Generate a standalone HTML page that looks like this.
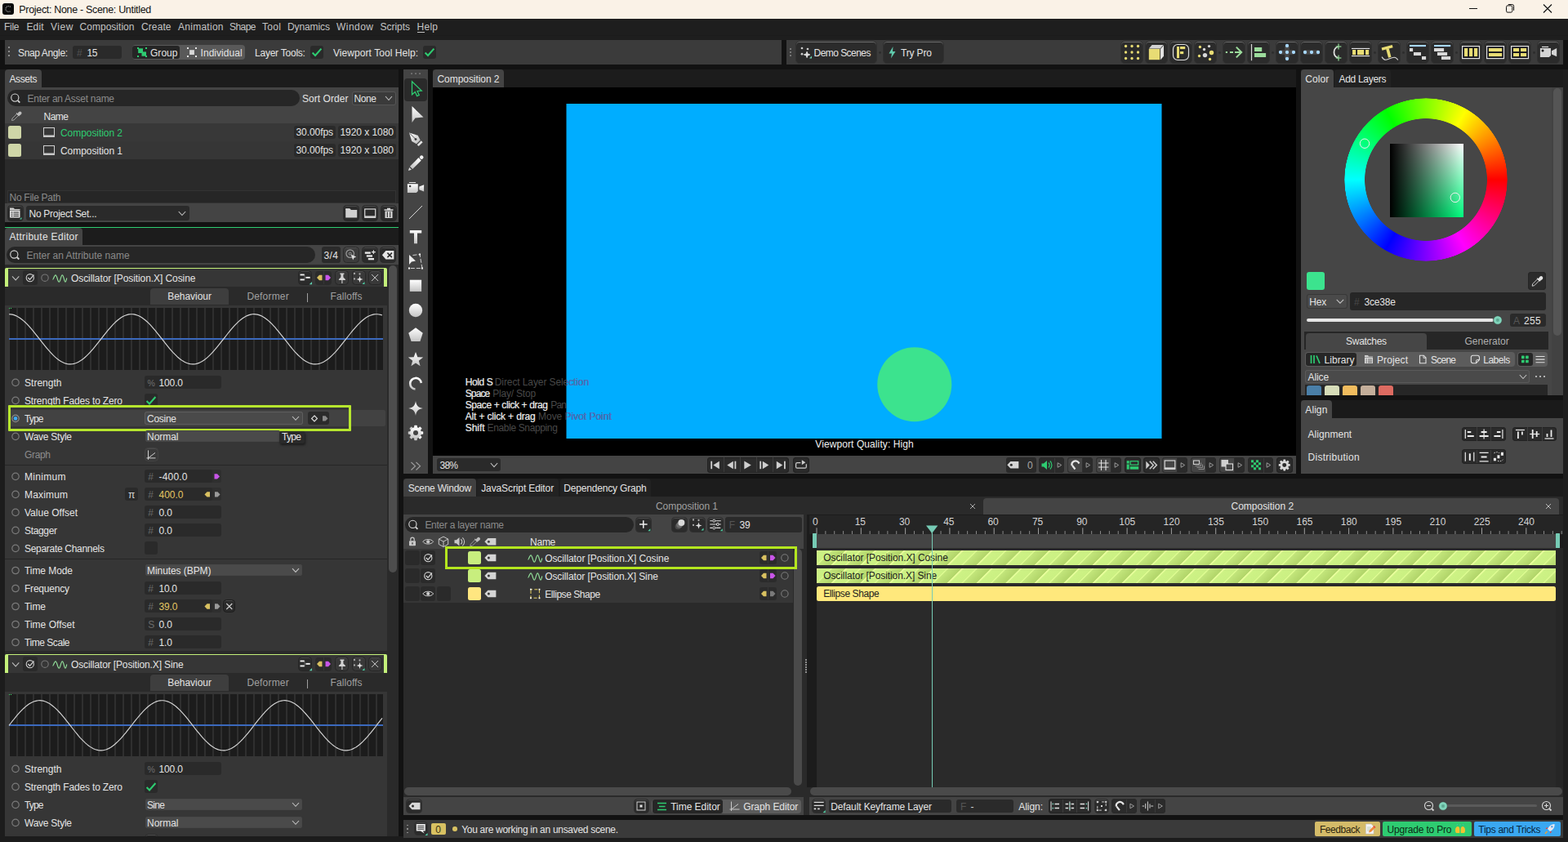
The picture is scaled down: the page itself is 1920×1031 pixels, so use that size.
<!DOCTYPE html>
<html lang="en"><head><meta charset="utf-8"><title>Project: None - Scene: Untitled</title>
<style>
html,body{margin:0;padding:0;width:1920px;height:1031px;overflow:hidden;background:#1c1c1c;}
body{position:relative;font-family:"Liberation Sans",sans-serif;font-size:12px;color:#e4e4e4;}
div,span,svg{position:absolute;box-sizing:border-box;}
span{white-space:pre;}
svg{overflow:visible;}
</style></head><body>
<div style="left:0px;top:0px;width:1920px;height:23px;background:#faf2e7;"></div>
<svg style="left:3px;top:4px;" width="14" height="14" viewBox="0 0 14 14"><rect x="0" y="0" width="14" height="14" rx="3" fill="#0a0a0a"/><path d="M9.8 4.6A3.4 3.4 0 1 0 9.8 9.4" fill="none" stroke="#8a8a8a" stroke-width="1.3" stroke-dasharray="1.2 0.8"/></svg>
<span style="left:23.3px;top:5px;line-height:14px;letter-spacing:-0.32px;font-size:12.5px;color:#101010;">Project: None - Scene: Untitled</span>
<svg style="left:1799px;top:5px;" width="10" height="11" viewBox="0 0 10 11"><path d="M0 5.5H10" stroke="#111" stroke-width="1"/></svg>
<svg style="left:1844px;top:5px;" width="10" height="11" viewBox="0 0 10 11"><rect x="0.5" y="1.9" width="7.3" height="8.2" rx="1.6" fill="none" stroke="#111" stroke-width="1"/><path d="M2.8 0.5H7.6A2 2 0 0 1 9.6 2.5V7.8" fill="none" stroke="#111" stroke-width="1"/></svg>
<svg style="left:1890px;top:5px;" width="10" height="11" viewBox="0 0 10 11"><path d="M0 .5L10 10.5M10 .5L0 10.5" stroke="#111" stroke-width="1.1"/></svg>
<div style="left:0px;top:23px;width:1920px;height:20px;background:#1e1e1e;"></div>
<div style="left:0px;top:43px;width:1920px;height:6px;background:#1e1e1e;"></div>
<div style="left:0px;top:43px;width:1920px;height:1px;background:#1b1b1b;"></div>
<div style="left:0px;top:49px;width:1920px;height:36px;background:#121212;"></div>
<span style="left:5px;top:26px;line-height:14px;letter-spacing:-0.28px;color:#c4c4c4;">File</span>
<span style="left:32.5px;top:26px;line-height:14px;letter-spacing:0.11px;color:#c4c4c4;">Edit</span>
<span style="left:62px;top:26px;line-height:14px;letter-spacing:0.57px;color:#c4c4c4;">View</span>
<span style="left:97.5px;top:26px;line-height:14px;letter-spacing:0.03px;color:#c4c4c4;">Composition</span>
<span style="left:173px;top:26px;line-height:14px;letter-spacing:0.1px;color:#c4c4c4;">Create</span>
<span style="left:218px;top:26px;line-height:14px;letter-spacing:0.27px;color:#c4c4c4;">Animation</span>
<span style="left:281px;top:26px;line-height:14px;letter-spacing:-0.55px;color:#c4c4c4;">Shape</span>
<span style="left:321px;top:26px;line-height:14px;letter-spacing:0.33px;color:#c4c4c4;">Tool</span>
<span style="left:352px;top:26px;line-height:14px;letter-spacing:-0.1px;color:#c4c4c4;">Dynamics</span>
<span style="left:412px;top:26px;line-height:14px;letter-spacing:0.46px;color:#c4c4c4;">Window</span>
<span style="left:465.5px;top:26px;line-height:14px;letter-spacing:-0.03px;color:#c4c4c4;">Scripts</span>
<span style="left:510.5px;top:26px;line-height:14px;letter-spacing:0.27px;color:#c4c4c4;">Help</span>
<div style="left:511px;top:39px;width:9px;height:1px;background:#c4c4c4;"></div>
<div style="left:6px;top:49px;width:951px;height:30px;background:#3b3b3b;"></div>
<div style="left:10px;top:57px;width:2px;height:2px;background:#8c8c8c;"></div>
<div style="left:10px;top:62px;width:2px;height:2px;background:#8c8c8c;"></div>
<div style="left:10px;top:67px;width:2px;height:2px;background:#8c8c8c;"></div>
<span style="left:22px;top:58px;line-height:14px;letter-spacing:-0.37px;">Snap Angle:</span>
<div style="left:89px;top:56px;width:60px;height:16px;background:#2a2a2a;border-radius:3px;"></div>
<span style="left:94px;top:58px;line-height:14px;color:#555;">#</span>
<span style="left:106.5px;top:58px;line-height:14px;letter-spacing:-0.35px;">15</span>
<div style="left:161.5px;top:55.3px;width:138.5px;height:17.5px;background:#595959;border-radius:4px;"></div>
<div style="left:162.3px;top:56.2px;width:57.5px;height:15.6px;background:#252525;border-radius:3px;"></div>
<svg style="left:168px;top:58px;" width="12" height="12" viewBox="0 0 12 12"><rect x="1.2" y="1.3" width="5.8" height="5.7" fill="#2ecc71"/><rect x="5.5" y="5.4" width="5.5" height="5.3" fill="#2ecc71"/><rect x="0" y="0" width="2" height="2" fill="#2ecc71"/><rect x="10" y="0" width="2" height="2" fill="#2ecc71"/><rect x="0" y="10" width="2" height="2" fill="#2ecc71"/><rect x="10" y="10" width="2" height="2" fill="#2ecc71"/></svg>
<span style="left:184px;top:58px;line-height:14px;letter-spacing:0.04px;">Group</span>
<svg style="left:229px;top:58px;" width="12" height="12" viewBox="0 0 12 12"><rect x="3.1" y="3.2" width="5.8" height="5.8" fill="#d8d8d8"/><rect x="0" y="0" width="2" height="2" fill="#e4e4e4"/><rect x="10" y="0" width="2" height="2" fill="#e4e4e4"/><rect x="0" y="10" width="2" height="2" fill="#e4e4e4"/><rect x="10" y="10" width="2" height="2" fill="#e4e4e4"/></svg>
<span style="left:245.6px;top:58px;line-height:14px;letter-spacing:0.03px;">Individual</span>
<span style="left:312px;top:58px;line-height:14px;letter-spacing:-0.23px;">Layer Tools:</span>
<div style="left:380px;top:56px;width:16px;height:16px;background:#2a2a2a;border-radius:3px;"></div>
<svg style="left:380px;top:56px;" width="16" height="16" viewBox="0 0 16 16"><path d="M2.6 8.6L6 12L13.4 3.6" fill="none" stroke="#2ecc71" stroke-width="2.1"/></svg>
<span style="left:408px;top:58px;line-height:14px;letter-spacing:0.06px;">Viewport Tool Help:</span>
<div style="left:518px;top:56px;width:16px;height:16px;background:#2a2a2a;border-radius:3px;"></div>
<svg style="left:518px;top:56px;" width="16" height="16" viewBox="0 0 16 16"><path d="M2.6 8.6L6 12L13.4 3.6" fill="none" stroke="#2ecc71" stroke-width="2.1"/></svg>
<div style="left:963px;top:49px;width:951px;height:30px;background:#3b3b3b;"></div>
<div style="left:967px;top:59px;width:2px;height:2px;background:#777;"></div>
<div style="left:967px;top:63px;width:2px;height:2px;background:#777;"></div>
<div style="left:967px;top:67px;width:2px;height:2px;background:#777;"></div>
<div style="left:974px;top:50px;width:100px;height:28px;background:#2b2b2b;border-radius:5px;border:1px solid #313131;box-shadow:inset 0 1px 0 #6a6a6a;"></div>
<span style="left:996.5px;top:58px;line-height:14px;letter-spacing:-0.54px;">Demo Scenes</span>
<svg style="left:980px;top:57px;" width="16" height="16" viewBox="0 0 16 16"><g fill="#cdcdcd"><circle cx="2" cy="2" r="1.35"/><circle cx="9" cy="3" r="1.35"/><circle cx="2" cy="9.2" r="1.35"/><path d="M8.1 6.2L9 8.9L11.8 9.9L9 10.9L8.1 13.6L7.2 10.9L4.4 9.9L7.2 8.9Z" stroke="#e4e4e4" stroke-width="0.9" fill="#e4e4e4"/></g><path d="M14 11.5V14.5H11Z" fill="#6fd4b4"/></svg>
<svg style="left:1075px;top:62px;" width="5" height="5" viewBox="0 0 5 5"><g transform="translate(0.6,0.4)"><circle cx="2" cy="2" r="1.4" fill="#2c2c2c"/></g></svg>
<div style="left:1081px;top:50px;width:75px;height:28px;background:#2b2b2b;border-radius:5px;border:1px solid #313131;box-shadow:inset 0 1px 0 #6a6a6a;"></div>
<svg style="left:1088px;top:57px;" width="9" height="15" viewBox="0 0 9 15"><path d="M5.5 0L0.5 8.5H4L3 14.5L8.5 6H5Z" fill="#5fc9ab"/></svg>
<span style="left:1103px;top:58px;line-height:14px;letter-spacing:-0.15px;">Try Pro</span>
<svg style="left:1491px;top:62px;" width="5" height="5" viewBox="0 0 5 5"><g transform="translate(0.5,0.4)"><circle cx="2" cy="2" r="1.4" fill="#2c2c2c"/></g></svg>
<svg style="left:1556px;top:62px;" width="5" height="5" viewBox="0 0 5 5"><g transform="translate(0.5,0.4)"><circle cx="2" cy="2" r="1.4" fill="#2c2c2c"/></g></svg>
<svg style="left:1681px;top:62px;" width="5" height="5" viewBox="0 0 5 5"><g transform="translate(0.5,0.4)"><circle cx="2" cy="2" r="1.4" fill="#2c2c2c"/></g></svg>
<svg style="left:1716px;top:62px;" width="5" height="5" viewBox="0 0 5 5"><g transform="translate(0.5,0.4)"><circle cx="2" cy="2" r="1.4" fill="#2c2c2c"/></g></svg>
<svg style="left:1781px;top:62px;" width="5" height="5" viewBox="0 0 5 5"><g transform="translate(0.5,0.4)"><circle cx="2" cy="2" r="1.4" fill="#2c2c2c"/></g></svg>
<svg style="left:1876px;top:62px;" width="5" height="5" viewBox="0 0 5 5"><g transform="translate(0.5,0.4)"><circle cx="2" cy="2" r="1.4" fill="#2c2c2c"/></g></svg>
<div style="left:1372px;top:50px;width:28px;height:28px;background:#2b2b2b;border-radius:5px;border:1px solid #313131;box-shadow:inset 0 1px 0 #6a6a6a;"></div>
<svg style="left:1372px;top:50px;" width="28" height="28" viewBox="0 0 28 28"><circle cx="6.5" cy="6.5" r="1.65" fill="#e8dc74"/><circle cx="6.5" cy="14.0" r="1.65" fill="#e8dc74"/><circle cx="6.5" cy="21.5" r="1.65" fill="#e8dc74"/><circle cx="14.0" cy="6.5" r="1.65" fill="#e8dc74"/><circle cx="14.0" cy="14.0" r="1.65" fill="#e8dc74"/><circle cx="14.0" cy="21.5" r="1.65" fill="#e8dc74"/><circle cx="21.5" cy="6.5" r="1.65" fill="#e8dc74"/><circle cx="21.5" cy="14.0" r="1.65" fill="#e8dc74"/><circle cx="21.5" cy="21.5" r="1.65" fill="#e8dc74"/></svg>
<div style="left:1402px;top:50px;width:28px;height:28px;background:#2b2b2b;border-radius:5px;border:1px solid #313131;box-shadow:inset 0 1px 0 #6a6a6a;"></div>
<svg style="left:1402px;top:50px;" width="28" height="28" viewBox="0 0 28 28"><path d="M4.8 9.4L8.6 5H22.6L18.6 9.4Z" fill="#d2d2d2"/><path d="M19 10L23 5.6V18.8L19 23.2Z" fill="#e2e2e2"/><rect x="4.8" y="9.9" width="13.4" height="13.3" fill="#e8dc74"/></svg>
<div style="left:1432px;top:50px;width:28px;height:28px;background:#2b2b2b;border-radius:5px;border:1px solid #313131;box-shadow:inset 0 1px 0 #6a6a6a;"></div>
<svg style="left:1432px;top:50px;" width="28" height="28" viewBox="0 0 28 28"><rect x="4.5" y="4.5" width="19" height="19" rx="5.5" fill="none" stroke="#dcdcdc" stroke-width="1.2"/><rect x="9" y="7" width="3" height="14.2" fill="#e8dc74"/><rect x="13" y="7" width="6.2" height="3.1" fill="#e8dc74"/><rect x="13" y="13" width="4.2" height="3.1" fill="#e8dc74"/></svg>
<div style="left:1462px;top:50px;width:28px;height:28px;background:#2b2b2b;border-radius:5px;border:1px solid #313131;box-shadow:inset 0 1px 0 #6a6a6a;"></div>
<svg style="left:1462px;top:50px;" width="28" height="28" viewBox="0 0 28 28"><circle cx="7.4" cy="7.5" r="1.65" fill="#e8dc74"/><circle cx="18.5" cy="6.6" r="1.65" fill="#d8d8d8"/><circle cx="12.5" cy="10.5" r="1.65" fill="#d8d8d8"/><circle cx="21.5" cy="14.5" r="2.7" fill="#e8dc74"/><circle cx="13.5" cy="17.6" r="2.7" fill="#d8d8d8"/><circle cx="6.5" cy="18.5" r="1.65" fill="#e8dc74"/><circle cx="19.5" cy="22.5" r="1.65" fill="#e8dc74"/></svg>
<div style="left:1497px;top:50px;width:28px;height:28px;background:#2b2b2b;border-radius:5px;border:1px solid #313131;box-shadow:inset 0 1px 0 #6a6a6a;"></div>
<svg style="left:1497px;top:50px;" width="28" height="28" viewBox="0 0 28 28"><rect x="3.8" y="13" width="2.2" height="2" fill="#9cdc9c"/><rect x="9" y="13" width="4" height="2" fill="#9cdc9c"/><rect x="15" y="13" width="8" height="2" fill="#9cdc9c"/><path d="M16.8 7.6L23.2 14L16.8 20.4" fill="none" stroke="#9cdc9c" stroke-width="2"/></svg>
<div style="left:1527px;top:50px;width:28px;height:28px;background:#2b2b2b;border-radius:5px;border:1px solid #313131;box-shadow:inset 0 1px 0 #6a6a6a;"></div>
<svg style="left:1527px;top:50px;" width="28" height="28" viewBox="0 0 28 28"><rect x="4.9" y="4" width="1.2" height="20.2" fill="#d8d8d8"/><rect x="9" y="8" width="9.2" height="5" fill="#9cdc9c"/><rect x="9" y="15" width="14.1" height="5" fill="#9cdc9c"/></svg>
<div style="left:1562px;top:50px;width:28px;height:28px;background:#2b2b2b;border-radius:5px;border:1px solid #313131;box-shadow:inset 0 1px 0 #6a6a6a;"></div>
<svg style="left:1562px;top:50px;" width="28" height="28" viewBox="0 0 28 28"><rect x="5" y="11.2" width="18" height="5.6" rx="2.8" fill="#484848"/><rect x="11.2" y="5" width="5.6" height="18" rx="2.8" fill="#484848"/><circle cx="14" cy="6" r="2.15" fill="#a8d8ff"/><circle cx="6" cy="14" r="2.15" fill="#a8d8ff"/><circle cx="14" cy="14" r="2.15" fill="#a8d8ff"/><circle cx="22" cy="14" r="2.15" fill="#a8d8ff"/><circle cx="14" cy="22" r="2.15" fill="#a8d8ff"/></svg>
<div style="left:1592px;top:50px;width:28px;height:28px;background:#2b2b2b;border-radius:5px;border:1px solid #313131;box-shadow:inset 0 1px 0 #6a6a6a;"></div>
<svg style="left:1592px;top:50px;" width="28" height="28" viewBox="0 0 28 28"><rect x="4" y="11.2" width="20" height="5.6" rx="2.8" fill="#484848"/><circle cx="6" cy="14" r="2.15" fill="#a8d8ff"/><circle cx="14" cy="14" r="2.15" fill="#a8d8ff"/><circle cx="22" cy="14" r="2.15" fill="#a8d8ff"/></svg>
<div style="left:1622px;top:50px;width:28px;height:28px;background:#2b2b2b;border-radius:5px;border:1px solid #313131;box-shadow:inset 0 1px 0 #6a6a6a;"></div>
<svg style="left:1622px;top:50px;" width="28" height="28" viewBox="0 0 28 28"><path d="M17 7A7.2 7.2 0 0 0 17 21" fill="none" stroke="#e2e2e2" stroke-width="1.7"/><path d="M17 3.5V10.5M13.8 7H20.4M17 17.5V24.5M13.8 21H20.4" stroke="#8fd494" stroke-width="1.5" opacity="0.85"/></svg>
<div style="left:1652px;top:50px;width:28px;height:28px;background:#2b2b2b;border-radius:5px;border:1px solid #313131;box-shadow:inset 0 1px 0 #6a6a6a;"></div>
<svg style="left:1652px;top:50px;" width="28" height="28" viewBox="0 0 28 28"><rect x="3" y="8.9" width="22.2" height="1.2" fill="#e8e8e8"/><rect x="3" y="17.9" width="22.2" height="1.2" fill="#e8e8e8"/><rect x="3.5" y="10.3" width="21.2" height="7.4" fill="#15151c"/><rect x="4" y="11" width="4.2" height="6.2" fill="#e8dc74"/><rect x="10" y="11" width="8.2" height="6.2" fill="#e8dc74"/><rect x="20" y="11" width="4.2" height="6.2" fill="#e8dc74"/></svg>
<div style="left:1687px;top:50px;width:28px;height:28px;background:#2b2b2b;border-radius:5px;border:1px solid #313131;box-shadow:inset 0 1px 0 #6a6a6a;"></div>
<svg style="left:1687px;top:50px;" width="28" height="28" viewBox="0 0 28 28"><g transform="translate(11.6,8.3) rotate(-15)"><rect x="-6.8" y="-1.7" width="13.6" height="3.4" fill="#e8dc74"/><rect x="-1.8" y="1.5" width="3.6" height="10.8" fill="#e8dc74"/></g><path d="M5 19.6C6.5 22 8 23.5 10 23.3C13.5 23 16 20.5 20 20.2C22.5 20 23.8 21.8 24.8 23.6" fill="none" stroke="#d4d4d4" stroke-width="1.1"/></svg>
<div style="left:1722px;top:50px;width:28px;height:28px;background:#2b2b2b;border-radius:5px;border:1px solid #313131;box-shadow:inset 0 1px 0 #6a6a6a;"></div>
<svg style="left:1722px;top:50px;" width="28" height="28" viewBox="0 0 28 28"><rect x="4" y="5" width="20" height="2.1" fill="#a8d8ff"/><rect x="4" y="9" width="4.1" height="4" fill="#d8d8d8"/><rect x="9" y="14" width="9" height="4" fill="#d8d8d8"/><rect x="19" y="19" width="5.1" height="4" fill="#d8d8d8"/></svg>
<div style="left:1752px;top:50px;width:28px;height:28px;background:#2b2b2b;border-radius:5px;border:1px solid #313131;box-shadow:inset 0 1px 0 #6a6a6a;"></div>
<svg style="left:1752px;top:50px;" width="28" height="28" viewBox="0 0 28 28"><rect x="4" y="5" width="20.2" height="2.1" fill="#a8d8ff"/><rect x="4" y="9" width="12.1" height="4" fill="#d8d8d8"/><rect x="8" y="14" width="12.1" height="4" fill="#d8d8d8"/><rect x="13" y="19" width="11.1" height="4" fill="#d8d8d8"/></svg>
<div style="left:1787px;top:50px;width:28px;height:28px;background:#2b2b2b;border-radius:5px;border:1px solid #313131;box-shadow:inset 0 1px 0 #6a6a6a;"></div>
<svg style="left:1787px;top:50px;" width="28" height="28" viewBox="0 0 28 28"><rect x="3.6" y="6.6" width="20.9" height="15" fill="#15151c" stroke="#e2e2e2" stroke-width="1.2"/><rect x="6" y="9" width="4.2" height="10.1" fill="#e8dc74"/><rect x="12" y="9" width="4.2" height="10.1" fill="#e8dc74"/><rect x="18" y="9" width="4.2" height="10.1" fill="#e8dc74"/></svg>
<div style="left:1817px;top:50px;width:28px;height:28px;background:#2b2b2b;border-radius:5px;border:1px solid #313131;box-shadow:inset 0 1px 0 #6a6a6a;"></div>
<svg style="left:1817px;top:50px;" width="28" height="28" viewBox="0 0 28 28"><rect x="3.6" y="6.6" width="20.9" height="15" fill="#15151c" stroke="#e2e2e2" stroke-width="1.2"/><rect x="6" y="9" width="16.2" height="4.1" fill="#e8dc74"/><rect x="6" y="15" width="16.2" height="4.1" fill="#e8dc74"/></svg>
<div style="left:1847px;top:50px;width:28px;height:28px;background:#2b2b2b;border-radius:5px;border:1px solid #313131;box-shadow:inset 0 1px 0 #6a6a6a;"></div>
<svg style="left:1847px;top:50px;" width="28" height="28" viewBox="0 0 28 28"><rect x="3.6" y="6.6" width="20.9" height="15" fill="#15151c" stroke="#e2e2e2" stroke-width="1.2"/><rect x="6" y="9" width="7.1" height="4.1" fill="#e8dc74"/><rect x="6" y="15" width="7.1" height="4.1" fill="#e8dc74"/><rect x="15" y="9" width="7.1" height="4.1" fill="#e8dc74"/><rect x="15" y="15" width="7.1" height="4.1" fill="#e8dc74"/></svg>
<div style="left:1882px;top:50px;width:28px;height:28px;background:#2b2b2b;border-radius:5px;border:1px solid #313131;box-shadow:inset 0 1px 0 #6a6a6a;"></div>
<svg style="left:1882px;top:50px;" width="28" height="28" viewBox="0 0 28 28"><rect x="6" y="6.9" width="8.1" height="1.1" fill="#e8e8e8"/><path d="M3.9 8.9H17V18L14.8 20.1H3.9Z" fill="#d4d4d4"/><path d="M18 12.3L24.2 8.9V19.3L18 16.5Z" fill="#d4d4d4"/><circle cx="7" cy="12" r="1.5" fill="#1c1c1c"/></svg>
<div style="left:6px;top:85px;width:482px;height:22px;background:#1c1c1c;"></div>
<div style="left:6px;top:85px;width:45px;height:22px;background:#444;border-radius:4px 4px 0 0;"></div>
<span style="left:11.5px;top:90px;line-height:14px;letter-spacing:-0.4px;">Assets</span>
<div style="left:6px;top:107px;width:482px;height:44px;background:#444;"></div>
<div style="left:9px;top:110px;width:357.5px;height:20px;background:#262626;border-radius:10px;"></div>
<svg style="left:12px;top:113px;" width="15" height="15" viewBox="0 0 15 15"><g transform="translate(0.3,0.6)"><circle cx="6" cy="6" r="4.6" fill="none" stroke="#d8d8d8" stroke-width="1.1"/><path d="M9.5 9.5L12 12" stroke="#d8d8d8" stroke-width="1.8"/></g></svg>
<span style="left:33.5px;top:114px;line-height:14px;letter-spacing:-0.27px;color:#8a8a8a;">Enter an Asset name</span>
<span style="left:370px;top:114px;line-height:14px;letter-spacing:0.05px;">Sort Order</span>
<div style="left:430.5px;top:111.5px;width:54px;height:17px;background:#3a3a3a;border-radius:3px;box-shadow:inset 0 0 0 1px #555;"></div>
<span style="left:433.5px;top:114px;line-height:14px;letter-spacing:-0.4px;">None</span>
<svg style="left:472px;top:118px;" width="8" height="5" viewBox="0 0 8 5"><path d="M0 0L4.0 4.5L8 0" fill="none" stroke="#c4c4c4" stroke-width="1.05"/></svg>
<svg style="left:13px;top:135px;" width="14" height="14" viewBox="0 0 14 14"><path d="M1.5 12.5L2 10L7.5 4.5L9.5 6.5L4 12Z" fill="none" stroke="#9a9a9a" stroke-width="1"/><path d="M7 3.5L10.5 7M8.5 5L10.5 2.5A1.4 1.4 0 0 1 12.5 4.5L10 6.5" fill="#bdbdbd" stroke="#bdbdbd" stroke-width="1.2"/></svg>
<span style="left:53.5px;top:135.5px;line-height:14px;letter-spacing:-0.5px;">Name</span>
<div style="left:6px;top:151px;width:482px;height:22px;background:#383838;"></div>
<div style="left:6px;top:173px;width:482px;height:22px;background:#363636;"></div>
<div style="left:6px;top:195px;width:482px;height:37px;background:#2a2a2a;"></div>
<div style="left:10px;top:154px;width:16px;height:16px;background:#cfd6a8;border-radius:2.5px;"></div>
<svg style="left:53px;top:156px;" width="14" height="12" viewBox="0 0 14 12"><rect x="0.5" y="0.5" width="13" height="9.5" fill="none" stroke="#d0d0d0" stroke-width="1"/><rect x="0" y="10" width="14" height="2" fill="#c8c8c8"/></svg>
<span style="left:74px;top:156px;line-height:14px;letter-spacing:-0.06px;color:#2ecc71;">Composition 2</span>
<div style="left:360px;top:154px;width:51px;height:16px;background:#2a2a2a;border-radius:3px;"></div>
<span style="left:362.5px;top:155px;line-height:14px;letter-spacing:-0.08px;">30.00fps</span>
<div style="left:414px;top:154px;width:71px;height:16px;background:#2a2a2a;border-radius:3px;"></div>
<span style="left:416.5px;top:155px;line-height:14px;letter-spacing:-0.06px;">1920 x 1080</span>
<div style="left:10px;top:176px;width:16px;height:16px;background:#cfd6a8;border-radius:2.5px;"></div>
<svg style="left:53px;top:178px;" width="14" height="12" viewBox="0 0 14 12"><rect x="0.5" y="0.5" width="13" height="9.5" fill="none" stroke="#d0d0d0" stroke-width="1"/><rect x="0" y="10" width="14" height="2" fill="#c8c8c8"/></svg>
<span style="left:74px;top:178px;line-height:14px;letter-spacing:-0.06px;">Composition 1</span>
<div style="left:360px;top:176px;width:51px;height:16px;background:#2a2a2a;border-radius:3px;"></div>
<span style="left:362.5px;top:177px;line-height:14px;letter-spacing:-0.08px;">30.00fps</span>
<div style="left:414px;top:176px;width:71px;height:16px;background:#2a2a2a;border-radius:3px;"></div>
<span style="left:416.5px;top:177px;line-height:14px;letter-spacing:-0.06px;">1920 x 1080</span>
<div style="left:6px;top:232px;width:482px;height:17px;background:#2a2a2a;"></div>
<div style="left:9px;top:233px;width:476px;height:16px;background:#262626;box-shadow:inset 0 0 0 1px #333;"></div>
<span style="left:11.5px;top:235px;line-height:14px;letter-spacing:-0.28px;color:#8a8a8a;">No File Path</span>
<div style="left:6px;top:249px;width:482px;height:23px;background:#444;"></div>
<div style="left:9px;top:251px;width:20px;height:20px;background:#2b2b2b;border-radius:4.5px;border:1px solid #2a2a2a;box-shadow:inset 0 1px 0 #4a4a4a;"></div>
<svg style="left:11px;top:253px;" width="16" height="16" viewBox="0 0 16 16"><g transform="translate(0.5,0.5)"><path d="M0.5 1H5L6.5 2.5H13V3.5H0.5Z" fill="#d0d0d0"/><rect x="0.5" y="4" width="12.5" height="9" fill="#e2e2e2"/><path d="M2 6.5H4M5 6.5H11.5M2 8.7H4M5 8.7H11.5M2 11H4M5 11H11.5" stroke="#2b2b2b" stroke-width="1.1"/><path d="M15 12.5V15H12.5Z" fill="#4fd1a5"/></g></svg>
<div style="left:32px;top:252px;width:200px;height:18px;background:#2a2a2a;border-radius:3px;"></div>
<span style="left:35.5px;top:255.3px;line-height:14px;letter-spacing:-0.27px;">No Project Set...</span>
<svg style="left:218px;top:259px;" width="10" height="5" viewBox="0 0 10 5"><g transform="translate(0.7,0)"><path d="M0 0L4.25 4.6L8.5 0" fill="none" stroke="#c4c4c4" stroke-width="1.05"/></g></svg>
<div style="left:420px;top:251px;width:20px;height:20px;background:#2b2b2b;border-radius:4.5px;border:1px solid #2a2a2a;box-shadow:inset 0 1px 0 #4a4a4a;"></div>
<div style="left:443px;top:251px;width:20px;height:20px;background:#2b2b2b;border-radius:4.5px;border:1px solid #2a2a2a;box-shadow:inset 0 1px 0 #4a4a4a;"></div>
<div style="left:466px;top:251px;width:20px;height:20px;background:#2b2b2b;border-radius:4.5px;border:1px solid #2a2a2a;box-shadow:inset 0 1px 0 #4a4a4a;"></div>
<svg style="left:420px;top:251px;" width="21" height="20" viewBox="0 0 21 20"><g transform="translate(0.2,0)"><path d="M3 4.5H8L9.5 6H17V15.5H3Z" fill="#cfcfcf"/><path d="M3 4.5H8L9.5 6H3Z" fill="#dedede"/></g></svg>
<svg style="left:443px;top:251px;" width="21" height="20" viewBox="0 0 21 20"><g transform="translate(0.2,0)"><rect x="3.5" y="5" width="13" height="9" fill="none" stroke="#d8d8d8" stroke-width="1.2"/><rect x="3" y="14" width="14" height="2" fill="#cfcfcf"/></g></svg>
<svg style="left:466px;top:251px;" width="20" height="20" viewBox="0 0 20 20"><path d="M4.5 6H15.5M8 4.5H12" stroke="#d8d8d8" stroke-width="1.4"/><path d="M5.5 7.5H14.5V16H5.5Z" fill="#d8d8d8"/><path d="M8.3 8.5V15M11.7 8.5V15" stroke="#2b2b2b" stroke-width="1.1"/></svg>
<div style="left:6px;top:272px;width:482px;height:6px;background:#121212;"></div>
<div style="left:6px;top:278px;width:482px;height:1px;background:#2ecc71;"></div>
<div style="left:6px;top:279px;width:482px;height:21px;background:#1c1c1c;"></div>
<div style="left:6px;top:279px;width:95px;height:21px;background:#444;border-radius:4px 4px 0 0;"></div>
<span style="left:11.5px;top:282.8px;line-height:14px;letter-spacing:0.31px;">Attribute Editor</span>
<div style="left:6px;top:300px;width:482px;height:24px;background:#444;"></div>
<div style="left:8px;top:302.3px;width:378px;height:19.6px;background:#262626;border-radius:10px;"></div>
<svg style="left:11px;top:305px;" width="15" height="15" viewBox="0 0 15 15"><g transform="translate(0.3,0.5)"><circle cx="6" cy="6" r="4.6" fill="none" stroke="#d8d8d8" stroke-width="1.1"/><path d="M9.5 9.5L12 12" stroke="#d8d8d8" stroke-width="1.8"/></g></svg>
<span style="left:32.5px;top:305.7px;line-height:14px;letter-spacing:-0px;color:#8a8a8a;">Enter an Attribute name</span>
<div style="left:394px;top:302.3px;width:23px;height:19.6px;background:#2a2a2a;border-radius:3px;"></div>
<span style="left:396.5px;top:305.7px;line-height:14px;letter-spacing:0.41px;">3/4</span>
<div style="left:420px;top:302px;width:20px;height:20px;background:#3c3c3c;border-radius:4.5px;border:1px solid #2a2a2a;box-shadow:inset 0 1px 0 #525252;"></div>
<div style="left:443px;top:302px;width:20px;height:20px;background:#2b2b2b;border-radius:4.5px;border:1px solid #2a2a2a;box-shadow:inset 0 1px 0 #4a4a4a;"></div>
<div style="left:465px;top:302px;width:20px;height:20px;background:#2b2b2b;border-radius:4.5px;border:1px solid #2a2a2a;box-shadow:inset 0 1px 0 #4a4a4a;"></div>
<svg style="left:420px;top:302px;" width="21" height="21" viewBox="0 0 21 21"><g transform="translate(0.2,0.6)"><circle cx="8.5" cy="8" r="4.8" fill="none" stroke="#9a9a9a" stroke-width="1.2"/><circle cx="8.5" cy="8" r="1.5" fill="none" stroke="#9a9a9a" stroke-width="1"/><path d="M9.5 9L16 12L13.2 13.2L12 16Z" fill="#e0e0e0"/></g></svg>
<svg style="left:443px;top:302px;" width="21" height="21" viewBox="0 0 21 21"><g transform="translate(0.2,0.6)"><rect x="3.6" y="5.8" width="7" height="2.4" fill="#e6e6e6"/><rect x="5.6" y="9.7" width="7.2" height="2.3" fill="#e6e6e6"/><rect x="7.6" y="13.4" width="7.2" height="2.3" fill="#e6e6e6"/><path d="M11.8 6H16.6M14.2 3.6V8.4" stroke="#e6e6e6" stroke-width="1.1"/></g></svg>
<svg style="left:465px;top:302px;" width="21" height="21" viewBox="0 0 21 21"><g transform="translate(0.4,0.6)"><path d="M2.5 9.7L7 4.5H17V15H7Z" fill="#e6e6e6"/><path d="M9 7L14.5 12.5M14.5 7L9 12.5" stroke="#2b2b2b" stroke-width="1.5"/></g></svg>
<div style="left:6px;top:324px;width:482px;height:700px;background:#2a2a2a;"></div>
<div style="left:476px;top:325px;width:10px;height:376px;background:#4d4d4d;border-radius:5px;"></div>
<div style="left:6px;top:328px;width:468px;height:23px;background:#363636;border-radius:2px 2px 0 0;"></div>
<div style="left:6px;top:328px;width:468px;height:23px;border-radius:2px 2px 0 0;border-top:1px solid #c4f07a;border-left:4px solid #c4f07a;border-right:4px solid #c4f07a;"></div>
<svg style="left:15px;top:338px;" width="9" height="5" viewBox="0 0 9 5"><g transform="translate(0,0.3)"><path d="M0 0L4.15 4.6L8.3 0" fill="none" stroke="#bdbdbd" stroke-width="1.05"/></g></svg>
<div style="left:28px;top:331px;width:18px;height:18px;background:#2a2a2a;border-radius:3px;"></div>
<svg style="left:31px;top:334px;" width="12" height="12" viewBox="0 0 12 12"><circle cx="5.8" cy="6.2" r="4.6" fill="none" stroke="#d0d0d0" stroke-width="1.1"/><path d="M3.3 6L5.5 8.3L10.5 2.5" fill="none" stroke="#d0d0d0" stroke-width="1.3"/></svg>
<svg style="left:50px;top:335px;" width="10" height="10" viewBox="0 0 10 10"><circle cx="5" cy="5.2" r="4.2" fill="none" stroke="#777" stroke-width="1.1"/></svg>
<svg style="left:64px;top:336px;" width="18" height="10" viewBox="0 0 18 10"><path d="M0.5 6.5C1.5 6.5 2.5 0.8 4 0.8C5.8 0.8 6.5 9.2 8.3 9.2C10 9.2 10.5 0.8 12.3 0.8C14 0.8 14.6 9.2 16 9.2C17 9.2 17.3 6 17.8 4.5" fill="none" stroke="#90dc98" stroke-width="1.2"/></svg>
<span style="left:87px;top:334px;line-height:14px;letter-spacing:-0.08px;">Oscillator [Position.X] Cosine</span>
<div style="left:365px;top:331px;width:17px;height:18px;background:#2b2b2b;border-radius:4.5px;border:1px solid #262626;box-shadow:inset 0 1px 0 #484848;"></div>
<div style="left:410px;top:331px;width:17px;height:18px;background:#393939;border-radius:4.5px;border:1px solid #262626;box-shadow:inset 0 1px 0 #4c4c4c;"></div>
<div style="left:431px;top:331px;width:17px;height:18px;background:#393939;border-radius:4.5px;border:1px solid #262626;box-shadow:inset 0 1px 0 #4c4c4c;"></div>
<div style="left:451px;top:331px;width:17px;height:18px;background:#393939;border-radius:4.5px;border:1px solid #262626;box-shadow:inset 0 1px 0 #4c4c4c;"></div>
<div style="left:386.2px;top:331.5px;width:20.3px;height:17px;background:#2b2b2b;border-radius:4px;"></div>
<div style="left:396.2px;top:332px;width:1px;height:16px;background:#363636;"></div>
<svg style="left:365px;top:331px;" width="18" height="18" viewBox="0 0 18 18"><g transform="translate(0.2,0.5)"><path d="M7.8 5V11.8M7.8 8.4H9.5" stroke="#5a5a5a" stroke-width="1.2" fill="none"/><rect x="2.3" y="4" width="5.2" height="1.9" fill="#f0f0f0"/><rect x="2.3" y="10" width="5.2" height="1.9" fill="#f0f0f0"/><rect x="9.3" y="7.4" width="5.2" height="1.9" fill="#f0f0f0"/><path d="M16.8 13.5V16.8H13.5Z" fill="#5fd1b0"/></g></svg>
<svg style="left:388px;top:336px;" width="7" height="8" viewBox="0 0 7 8"><g transform="translate(0,0.5)"><path d="M0 3.5L3 0.3H6.5V6.7H3Z" fill="#d8c060"/></g></svg>
<svg style="left:398px;top:336px;" width="7" height="8" viewBox="0 0 7 8"><g transform="translate(0.5,0.5)"><path d="M6.5 3.5L3.5 0.3H0V6.7H3.5Z" fill="#c855e8"/></g></svg>
<svg style="left:410px;top:331px;" width="18" height="18" viewBox="0 0 18 18"><g transform="translate(0.4,0.5)"><path d="M6 3H11V4.5H10V8L12.5 10.5V11.5H4.5V10.5L7 8V4.5H6Z" fill="#d2d2d2"/><path d="M8.5 11.5V15.5" stroke="#d2d2d2" stroke-width="1.1"/></g></svg>
<svg style="left:431px;top:332px;" width="16" height="17" viewBox="0 0 16 17"><g transform="translate(0,0.5)"><g fill="#e0e0e0"><circle cx="3" cy="2.5" r="1.15" fill="#a8a8a8"/><circle cx="9.5" cy="3" r="1.15" fill="#a8a8a8"/><circle cx="3" cy="9" r="1.15" fill="#a8a8a8"/><path d="M9.5 5.5L10.5 8.5L13.5 9.5L10.5 10.5L9.5 13.5L8.5 10.5L5.5 9.5L8.5 8.5Z"/></g><path d="M15.5 12.5V15.5H12.5Z" fill="#4fd1a5"/></g></svg>
<svg style="left:450px;top:331px;" width="18" height="18" viewBox="0 0 18 18"><g transform="translate(0.6,0.5)"><path d="M4.5 4.5L12.5 12.5M12.5 4.5L4.5 12.5" stroke="#cacaca" stroke-width="1"/></g></svg>
<div style="left:6px;top:351px;width:468px;height:22px;background:#2a2a2a;"></div>
<div style="left:184px;top:353px;width:96px;height:20px;background:#3e3e3e;border-radius:4px 4px 0 0;"></div>
<span style="left:205.3px;top:356px;line-height:14px;letter-spacing:-0.05px;">Behaviour</span>
<span style="left:302.4px;top:356px;line-height:14px;letter-spacing:0.18px;color:#a0a0a0;">Deformer</span>
<div style="left:376px;top:359px;width:1px;height:11px;background:#a0a0a0;"></div>
<span style="left:404.5px;top:356px;line-height:14px;letter-spacing:0.08px;color:#a0a0a0;">Falloffs</span>
<div style="left:6px;top:373.5px;width:468px;height:200px;background:#363636;"></div>
<div style="left:11px;top:377px;width:458px;height:76px;background:#1c1c1c;"></div>
<svg style="left:11px;top:377px;" width="458" height="76" viewBox="0 0 458 76"><rect x="9" y="0" width="2" height="76" fill="#2f2f2f"/><rect x="19" y="0" width="2" height="76" fill="#2f2f2f"/><rect x="29" y="0" width="2" height="76" fill="#2f2f2f"/><rect x="39" y="0" width="2" height="76" fill="#2f2f2f"/><rect x="49" y="0" width="2" height="76" fill="#2f2f2f"/><rect x="59" y="0" width="2" height="76" fill="#2f2f2f"/><rect x="69" y="0" width="2" height="76" fill="#2f2f2f"/><rect x="79" y="0" width="2" height="76" fill="#2f2f2f"/><rect x="89" y="0" width="2" height="76" fill="#2f2f2f"/><rect x="99" y="0" width="2" height="76" fill="#2f2f2f"/><rect x="109" y="0" width="2" height="76" fill="#2f2f2f"/><rect x="119" y="0" width="2" height="76" fill="#2f2f2f"/><rect x="129" y="0" width="2" height="76" fill="#2f2f2f"/><rect x="139" y="0" width="2" height="76" fill="#2f2f2f"/><rect x="149" y="0" width="2" height="76" fill="#2f2f2f"/><rect x="159" y="0" width="2" height="76" fill="#2f2f2f"/><rect x="169" y="0" width="2" height="76" fill="#2f2f2f"/><rect x="179" y="0" width="2" height="76" fill="#2f2f2f"/><rect x="189" y="0" width="2" height="76" fill="#2f2f2f"/><rect x="199" y="0" width="2" height="76" fill="#2f2f2f"/><rect x="209" y="0" width="2" height="76" fill="#2f2f2f"/><rect x="219" y="0" width="2" height="76" fill="#2f2f2f"/><rect x="229" y="0" width="2" height="76" fill="#2f2f2f"/><rect x="239" y="0" width="2" height="76" fill="#2f2f2f"/><rect x="249" y="0" width="2" height="76" fill="#2f2f2f"/><rect x="259" y="0" width="2" height="76" fill="#2f2f2f"/><rect x="269" y="0" width="2" height="76" fill="#2f2f2f"/><rect x="279" y="0" width="2" height="76" fill="#2f2f2f"/><rect x="289" y="0" width="2" height="76" fill="#2f2f2f"/><rect x="299" y="0" width="2" height="76" fill="#2f2f2f"/><rect x="309" y="0" width="2" height="76" fill="#2f2f2f"/><rect x="319" y="0" width="2" height="76" fill="#2f2f2f"/><rect x="329" y="0" width="2" height="76" fill="#2f2f2f"/><rect x="339" y="0" width="2" height="76" fill="#2f2f2f"/><rect x="349" y="0" width="2" height="76" fill="#2f2f2f"/><rect x="359" y="0" width="2" height="76" fill="#2f2f2f"/><rect x="369" y="0" width="2" height="76" fill="#2f2f2f"/><rect x="379" y="0" width="2" height="76" fill="#2f2f2f"/><rect x="389" y="0" width="2" height="76" fill="#2f2f2f"/><rect x="399" y="0" width="2" height="76" fill="#2f2f2f"/><rect x="409" y="0" width="2" height="76" fill="#2f2f2f"/><rect x="419" y="0" width="2" height="76" fill="#2f2f2f"/><rect x="429" y="0" width="2" height="76" fill="#2f2f2f"/><rect x="439" y="0" width="2" height="76" fill="#2f2f2f"/><rect x="449" y="0" width="2" height="76" fill="#2f2f2f"/><rect x="0" y="0" width="1" height="76" fill="#3a3a3a"/><rect x="0" y="37" width="458" height="2" fill="#3b69bd"/><polyline points="0.0,7.70 2.0,7.81 4.0,8.12 6.0,8.65 7.9,9.38 9.9,10.31 11.9,11.44 13.9,12.75 15.9,14.24 17.9,15.89 19.9,17.70 21.9,19.65 23.8,21.73 25.8,23.93 27.8,26.23 29.8,28.61 31.8,31.05 33.8,33.55 35.8,36.08 37.8,38.62 39.7,41.17 41.7,43.69 43.7,46.17 45.7,48.61 47.7,50.96 49.7,53.24 51.7,55.41 53.6,57.46 55.6,59.37 57.6,61.14 59.6,62.76 61.6,64.20 63.6,65.47 65.6,66.54 67.6,67.42 69.5,68.10 71.5,68.58 73.5,68.84 75.5,68.89 77.5,68.73 79.5,68.36 81.5,67.78 83.5,67.00 85.4,66.02 87.4,64.85 89.4,63.49 91.4,61.96 93.4,60.26 95.4,58.42 97.4,56.43 99.3,54.32 101.3,52.10 103.3,49.78 105.3,47.38 107.3,44.92 109.3,42.41 111.3,39.88 113.3,37.33 115.2,34.79 117.2,32.28 119.2,29.80 121.2,27.39 123.2,25.05 125.2,22.80 127.2,20.66 129.2,18.64 131.1,16.76 133.1,15.03 135.1,13.46 137.1,12.06 139.1,10.84 141.1,9.81 143.1,8.98 145.0,8.36 147.0,7.94 149.0,7.73 151.0,7.73 153.0,7.94 155.0,8.36 157.0,8.99 159.0,9.83 160.9,10.86 162.9,12.08 164.9,13.48 166.9,15.06 168.9,16.79 170.9,18.67 172.9,20.69 174.9,22.84 176.8,25.08 178.8,27.43 180.8,29.84 182.8,32.31 184.8,34.83 186.8,37.37 188.8,39.92 190.7,42.45 192.7,44.96 194.7,47.42 196.7,49.81 198.7,52.13 200.7,54.35 202.7,56.46 204.7,58.45 206.6,60.29 208.6,61.98 210.6,63.51 212.6,64.87 214.6,66.04 216.6,67.02 218.6,67.80 220.6,68.37 222.5,68.74 224.5,68.89 226.5,68.84 228.5,68.57 230.5,68.10 232.5,67.41 234.5,66.53 236.4,65.45 238.4,64.18 240.4,62.73 242.4,61.12 244.4,59.34 246.4,57.42 248.4,55.37 250.4,53.20 252.3,50.93 254.3,48.57 256.3,46.14 258.3,43.65 260.3,41.13 262.3,38.58 264.3,36.04 266.3,33.51 268.2,31.01 270.2,28.57 272.2,26.19 274.2,23.90 276.2,21.70 278.2,19.62 280.2,17.67 282.1,15.86 284.1,14.21 286.1,12.73 288.1,11.42 290.1,10.30 292.1,9.37 294.1,8.64 296.1,8.12 298.0,7.80 300.0,7.70 302.0,7.81 304.0,8.13 306.0,8.66 308.0,9.39 310.0,10.33 312.0,11.46 313.9,12.77 315.9,14.26 317.9,15.92 319.9,17.73 321.9,19.68 323.9,21.77 325.9,23.97 327.8,26.26 329.8,28.64 331.8,31.09 333.8,33.59 335.8,36.12 337.8,38.66 339.8,41.20 341.8,43.73 343.7,46.21 345.7,48.64 347.7,51.00 349.7,53.27 351.7,55.44 353.7,57.49 355.7,59.40 357.7,61.17 359.6,62.78 361.6,64.22 363.6,65.48 365.6,66.56 367.6,67.44 369.6,68.11 371.6,68.58 373.5,68.84 375.5,68.89 377.5,68.73 379.5,68.36 381.5,67.77 383.5,66.99 385.5,66.00 387.5,64.83 389.4,63.47 391.4,61.93 393.4,60.24 395.4,58.39 397.4,56.40 399.4,54.28 401.4,52.06 403.4,49.74 405.3,47.34 407.3,44.88 409.3,42.37 411.3,39.84 413.3,37.29 415.3,34.75 417.3,32.24 419.2,29.77 421.2,27.35 423.2,25.01 425.2,22.77 427.2,20.63 429.2,18.62 431.2,16.74 433.2,15.01 435.1,13.44 437.1,12.04 439.1,10.82 441.1,9.80 443.1,8.97 445.1,8.35 447.1,7.93 449.1,7.72 451.0,7.73 453.0,7.95 455.0,8.37 457.0,9.01" fill="none" stroke="#d6d6d6" stroke-width="1.15"/><rect x="0" y="0" width="1" height="1" fill="#3ce36a"/><rect x="2" y="0" width="1" height="1" fill="#3ce36a"/></svg>
<svg style="left:13px;top:462px;" width="12" height="12" viewBox="0 0 12 12"><g transform="translate(0.5,0.9)"><circle cx="5.5" cy="5.5" r="4.2" fill="none" stroke="#7a7a7a" stroke-width="1.2"/></g></svg>
<span style="left:30px;top:462.1px;line-height:14px;letter-spacing:0.02px;">Strength</span>
<div style="left:177px;top:460px;width:94px;height:16px;background:#2a2a2a;border-radius:3px;"></div>
<span style="left:180.5px;top:462.9px;line-height:12px;font-size:10.5px;color:#707070;">%</span>
<span style="left:194.5px;top:462.1px;line-height:14px;letter-spacing:-0.13px;">100.0</span>
<svg style="left:13px;top:484px;" width="12" height="12" viewBox="0 0 12 12"><g transform="translate(0.5,0.9)"><circle cx="5.5" cy="5.5" r="4.2" fill="none" stroke="#7a7a7a" stroke-width="1.2"/></g></svg>
<span style="left:30px;top:484.1px;line-height:14px;letter-spacing:-0.16px;">Strength Fades to Zero</span>
<div style="left:177px;top:482.4px;width:16px;height:16px;background:#2a2a2a;border-radius:3px;"></div>
<svg style="left:177px;top:482px;" width="16" height="17" viewBox="0 0 16 17"><g transform="translate(0,0.4)"><path d="M2.6 8.6L6 12L13.4 3.6" fill="none" stroke="#2ecc71" stroke-width="2.1"/></g></svg>
<div style="left:10px;top:502.4px;width:461.6px;height:20px;background:#424242;border-radius:2px;"></div>
<svg style="left:13px;top:506px;" width="12" height="12" viewBox="0 0 12 12"><g transform="translate(0.5,0.9)"><circle cx="5.5" cy="5.5" r="4.2" fill="none" stroke="#8a8a8a" stroke-width="1.2"/><circle cx="5.5" cy="5.5" r="2.3" fill="#3fa9f5"/></g></svg>
<span style="left:30px;top:506.1px;line-height:14px;letter-spacing:-0.84px;">Type</span>
<div style="left:177px;top:504px;width:194px;height:16px;background:#4a4a4a;border-radius:3px;box-shadow:inset 0 0 0 1px #5e5e5e;"></div>
<span style="left:180px;top:506.1px;line-height:14px;letter-spacing:-0.27px;">Cosine</span>
<svg style="left:358px;top:510px;" width="8" height="5" viewBox="0 0 8 5"><path d="M0 0L4.0 4.3L8 0" fill="none" stroke="#c4c4c4" stroke-width="1.05"/></svg>
<div style="left:377px;top:504px;width:26px;height:16px;background:#2b2b2b;border-radius:3px;"></div>
<svg style="left:381px;top:508px;" width="8" height="9" viewBox="0 0 8 9"><g transform="translate(0,0.4)"><path d="M4 0.6L7.4 4L4 7.4L0.6 4Z" fill="none" stroke="#e0e0e0" stroke-width="1.2"/></g></svg>
<svg style="left:395px;top:508px;" width="7" height="8" viewBox="0 0 7 8"><g transform="translate(0,0.9)"><path d="M6.5 3.5L3.5 0.3H0V6.7H3.5Z" fill="#8a8a8a"/></g></svg>
<div style="left:10px;top:496.4px;width:420px;height:32px;border:3px solid #b6e62e;border-radius:1px;"></div>
<svg style="left:13px;top:528px;" width="12" height="12" viewBox="0 0 12 12"><g transform="translate(0.5,0.9)"><circle cx="5.5" cy="5.5" r="4.2" fill="none" stroke="#7a7a7a" stroke-width="1.2"/></g></svg>
<span style="left:30px;top:528.1px;line-height:14px;letter-spacing:-0.25px;">Wave Style</span>
<div style="left:178px;top:527px;width:165px;height:14px;background:#4a4a4a;border-radius:3px;box-shadow:inset 0 0 0 1px #474747;"></div>
<span style="left:180px;top:528.1px;line-height:14px;letter-spacing:-0.03px;">Normal</span>
<div style="left:342px;top:528.4px;width:30.5px;height:15px;background:#2a2a2a;border-radius:2px;box-shadow:1px 2px 3px rgba(0,0,0,.5);"></div>
<span style="left:345px;top:528.1px;line-height:14px;letter-spacing:-0.67px;">Type</span>
<span style="left:30px;top:550.1px;line-height:14px;letter-spacing:-0.34px;color:#8c8c8c;">Graph</span>
<div style="left:177px;top:548px;width:17px;height:17px;background:#383838;border-radius:4.5px;border:1px solid #434343;box-shadow:inset 0 1px 0 #4a4a4a;"></div>
<svg style="left:177px;top:548px;" width="17" height="17" viewBox="0 0 17 17"><g transform="translate(0,0.4)"><path d="M4.5 3V14.5M2.5 12.5H13.5" stroke="#d0d0d0" stroke-width="1"/><path d="M4.5 12.5L13 6" stroke="#d0d0d0" stroke-width="1"/></g></svg>
<div style="left:6px;top:569px;width:468px;height:1px;background:#262626;"></div>
<div style="left:6px;top:570px;width:468px;height:230px;background:#363636;"></div>
<svg style="left:13px;top:577px;" width="12" height="12" viewBox="0 0 12 12"><g transform="translate(0.5,0.9)"><circle cx="5.5" cy="5.5" r="4.2" fill="none" stroke="#7a7a7a" stroke-width="1.2"/></g></svg>
<span style="left:30px;top:577.1px;line-height:14px;letter-spacing:0.31px;">Minimum</span>
<div style="left:177px;top:575px;width:83.5px;height:16px;background:#2a2a2a;border-radius:3px;"></div>
<span style="left:181.3px;top:577.1px;line-height:14px;color:#6a6a6a;">#</span>
<span style="left:194.5px;top:577.1px;line-height:14px;letter-spacing:0.19px;">-400.0</span>
<div style="left:260px;top:575px;width:11px;height:16px;background:#2f2f2f;border-radius:0 3px 3px 0;"></div>
<svg style="left:262px;top:579px;" width="7" height="8" viewBox="0 0 7 8"><g transform="translate(0.5,0.9)"><path d="M6.5 3.5L3.5 0.3H0V6.7H3.5Z" fill="#c855e8"/></g></svg>
<svg style="left:13px;top:599px;" width="12" height="12" viewBox="0 0 12 12"><g transform="translate(0.5,0.9)"><circle cx="5.5" cy="5.5" r="4.2" fill="none" stroke="#7a7a7a" stroke-width="1.2"/></g></svg>
<span style="left:30px;top:599.1px;line-height:14px;letter-spacing:0.17px;">Maximum</span>
<div style="left:153px;top:597px;width:16px;height:16px;background:#2a2a2a;border-radius:3px;"></div>
<span style="left:157px;top:598.9px;line-height:14px;color:#d8d8d8;">π</span>
<div style="left:177px;top:597px;width:83.5px;height:16px;background:#2a2a2a;border-radius:3px;"></div>
<span style="left:181.3px;top:599.1px;line-height:14px;color:#6a6a6a;">#</span>
<span style="left:194.5px;top:599.1px;line-height:14px;letter-spacing:-0.01px;color:#e3c762;">400.0</span>
<div style="left:260px;top:597px;width:11px;height:16px;background:#2f2f2f;border-radius:0 3px 3px 0;"></div>
<svg style="left:250px;top:601px;" width="7" height="8" viewBox="0 0 7 8"><g transform="translate(0.5,0.9)"><path d="M0 3.5L3 0.3H6.5V6.7H3Z" fill="#d8c060"/></g></svg>
<svg style="left:263px;top:601px;" width="7" height="8" viewBox="0 0 7 8"><g transform="translate(0,0.9)"><path d="M6.5 3.5L3.5 0.3H0V6.7H3.5Z" fill="#9a9a9a"/></g></svg>
<svg style="left:13px;top:621px;" width="12" height="12" viewBox="0 0 12 12"><g transform="translate(0.5,0.9)"><circle cx="5.5" cy="5.5" r="4.2" fill="none" stroke="#7a7a7a" stroke-width="1.2"/></g></svg>
<span style="left:30px;top:621.1px;line-height:14px;letter-spacing:0.01px;">Value Offset</span>
<div style="left:177px;top:619px;width:94px;height:16px;background:#2a2a2a;border-radius:3px;"></div>
<span style="left:181.3px;top:621.1px;line-height:14px;color:#6a6a6a;">#</span>
<span style="left:194.5px;top:621.1px;line-height:14px;letter-spacing:-0.09px;">0.0</span>
<svg style="left:13px;top:643px;" width="12" height="12" viewBox="0 0 12 12"><g transform="translate(0.5,0.9)"><circle cx="5.5" cy="5.5" r="4.2" fill="none" stroke="#7a7a7a" stroke-width="1.2"/></g></svg>
<span style="left:30px;top:643.1px;line-height:14px;letter-spacing:-0.34px;">Stagger</span>
<div style="left:177px;top:641px;width:94px;height:16px;background:#2a2a2a;border-radius:3px;"></div>
<span style="left:181.3px;top:643.1px;line-height:14px;color:#6a6a6a;">#</span>
<span style="left:194.5px;top:643.1px;line-height:14px;letter-spacing:-0.09px;">0.0</span>
<svg style="left:13px;top:665px;" width="12" height="12" viewBox="0 0 12 12"><g transform="translate(0.5,0.9)"><circle cx="5.5" cy="5.5" r="4.2" fill="none" stroke="#7a7a7a" stroke-width="1.2"/></g></svg>
<span style="left:30px;top:665.1px;line-height:14px;letter-spacing:-0.3px;">Separate Channels</span>
<div style="left:177px;top:663.4px;width:16px;height:16px;background:#2a2a2a;border-radius:3px;"></div>
<div style="left:6px;top:684px;width:468px;height:1px;background:#262626;"></div>
<svg style="left:13px;top:693px;" width="12" height="11" viewBox="0 0 12 11"><g transform="translate(0.5,0)"><circle cx="5.5" cy="5.5" r="4.2" fill="none" stroke="#7a7a7a" stroke-width="1.2"/></g></svg>
<span style="left:30px;top:692.2px;line-height:14px;letter-spacing:-0.07px;">Time Mode</span>
<div style="left:178px;top:691px;width:192px;height:14px;background:#4a4a4a;border-radius:3px;box-shadow:inset 0 0 0 1px #474747;"></div>
<span style="left:180px;top:692.2px;line-height:14px;letter-spacing:-0.07px;">Minutes (BPM)</span>
<svg style="left:358px;top:696px;" width="8" height="5" viewBox="0 0 8 5"><g transform="translate(0,0.1)"><path d="M0 0L4.0 4.3L8 0" fill="none" stroke="#c4c4c4" stroke-width="1.05"/></g></svg>
<svg style="left:13px;top:715px;" width="12" height="11" viewBox="0 0 12 11"><g transform="translate(0.5,0)"><circle cx="5.5" cy="5.5" r="4.2" fill="none" stroke="#7a7a7a" stroke-width="1.2"/></g></svg>
<span style="left:30px;top:714.2px;line-height:14px;letter-spacing:-0.21px;">Frequency</span>
<div style="left:177px;top:712px;width:94px;height:16px;background:#2a2a2a;border-radius:3px;"></div>
<span style="left:181.3px;top:714.2px;line-height:14px;color:#6a6a6a;">#</span>
<span style="left:194.5px;top:714.2px;line-height:14px;letter-spacing:-0.29px;">10.0</span>
<svg style="left:13px;top:737px;" width="12" height="11" viewBox="0 0 12 11"><g transform="translate(0.5,0)"><circle cx="5.5" cy="5.5" r="4.2" fill="none" stroke="#7a7a7a" stroke-width="1.2"/></g></svg>
<span style="left:30px;top:736.2px;line-height:14px;letter-spacing:-0.07px;">Time</span>
<div style="left:177px;top:734px;width:83.5px;height:16px;background:#2a2a2a;border-radius:3px;"></div>
<span style="left:181.3px;top:736.2px;line-height:14px;color:#6a6a6a;">#</span>
<span style="left:194.5px;top:736.2px;line-height:14px;letter-spacing:-0.12px;color:#e3c762;">39.0</span>
<div style="left:260px;top:734px;width:11px;height:16px;background:#2f2f2f;border-radius:0 3px 3px 0;"></div>
<svg style="left:250px;top:739px;" width="7" height="7" viewBox="0 0 7 7"><g transform="translate(0.5,0)"><path d="M0 3.5L3 0.3H6.5V6.7H3Z" fill="#d8c060"/></g></svg>
<svg style="left:263px;top:739px;" width="7" height="7" viewBox="0 0 7 7"><path d="M6.5 3.5L3.5 0.3H0V6.7H3.5Z" fill="#9a9a9a"/></svg>
<div style="left:273px;top:734px;width:15px;height:16px;background:#2b2b2b;border-radius:4.5px;border:1px solid #1d1d1d;box-shadow:inset 0 1px 0 #4a4a4a;"></div>
<svg style="left:273px;top:734px;" width="16" height="17" viewBox="0 0 16 17"><g transform="translate(0,0.5)"><path d="M4.3 4.5L11.3 11.5M11.3 4.5L4.3 11.5" stroke="#d0d0d0" stroke-width="1.1"/></g></svg>
<svg style="left:13px;top:759px;" width="12" height="11" viewBox="0 0 12 11"><g transform="translate(0.5,0)"><circle cx="5.5" cy="5.5" r="4.2" fill="none" stroke="#7a7a7a" stroke-width="1.2"/></g></svg>
<span style="left:30px;top:758.2px;line-height:14px;letter-spacing:0.02px;">Time Offset</span>
<div style="left:177px;top:756px;width:94px;height:16px;background:#2a2a2a;border-radius:3px;"></div>
<span style="left:181.3px;top:758.2px;line-height:14px;color:#6a6a6a;">S</span>
<span style="left:194.5px;top:758.2px;line-height:14px;letter-spacing:-0.09px;">0.0</span>
<svg style="left:13px;top:781px;" width="12" height="11" viewBox="0 0 12 11"><g transform="translate(0.5,0)"><circle cx="5.5" cy="5.5" r="4.2" fill="none" stroke="#7a7a7a" stroke-width="1.2"/></g></svg>
<span style="left:30px;top:780.2px;line-height:14px;letter-spacing:-0.45px;">Time Scale</span>
<div style="left:177px;top:778px;width:94px;height:16px;background:#2a2a2a;border-radius:3px;"></div>
<span style="left:181.3px;top:780.2px;line-height:14px;color:#6a6a6a;">#</span>
<span style="left:194.5px;top:780.2px;line-height:14px;letter-spacing:-0.09px;">1.0</span>
<div style="left:6px;top:797px;width:468px;height:4px;background:#2a2a2a;"></div>
<div style="left:6px;top:801px;width:482px;height:223px;overflow:hidden;">
<div style="left:-6px;top:-801px;width:1px;height:1px;">
<div style="left:6px;top:801px;width:468px;height:23px;background:#363636;border-radius:2px 2px 0 0;"></div>
<div style="left:6px;top:801px;width:468px;height:23px;border-radius:2px 2px 0 0;border-top:1px solid #c4f07a;border-left:4px solid #c4f07a;border-right:4px solid #c4f07a;"></div>
<svg style="left:15px;top:811px;" width="9" height="5" viewBox="0 0 9 5"><g transform="translate(0,0.3)"><path d="M0 0L4.15 4.6L8.3 0" fill="none" stroke="#bdbdbd" stroke-width="1.05"/></g></svg>
<div style="left:28px;top:804px;width:18px;height:18px;background:#2a2a2a;border-radius:3px;"></div>
<svg style="left:31px;top:807px;" width="12" height="12" viewBox="0 0 12 12"><circle cx="5.8" cy="6.2" r="4.6" fill="none" stroke="#d0d0d0" stroke-width="1.1"/><path d="M3.3 6L5.5 8.3L10.5 2.5" fill="none" stroke="#d0d0d0" stroke-width="1.3"/></svg>
<svg style="left:50px;top:808px;" width="10" height="10" viewBox="0 0 10 10"><circle cx="5" cy="5.2" r="4.2" fill="none" stroke="#777" stroke-width="1.1"/></svg>
<svg style="left:64px;top:809px;" width="18" height="10" viewBox="0 0 18 10"><path d="M0.5 6.5C1.5 6.5 2.5 0.8 4 0.8C5.8 0.8 6.5 9.2 8.3 9.2C10 9.2 10.5 0.8 12.3 0.8C14 0.8 14.6 9.2 16 9.2C17 9.2 17.3 6 17.8 4.5" fill="none" stroke="#90dc98" stroke-width="1.2"/></svg>
<span style="left:87px;top:807px;line-height:14px;letter-spacing:-0.14px;">Oscillator [Position.X] Sine</span>
<div style="left:365px;top:804px;width:17px;height:18px;background:#2b2b2b;border-radius:4.5px;border:1px solid #262626;box-shadow:inset 0 1px 0 #484848;"></div>
<div style="left:410px;top:804px;width:17px;height:18px;background:#393939;border-radius:4.5px;border:1px solid #262626;box-shadow:inset 0 1px 0 #4c4c4c;"></div>
<div style="left:431px;top:804px;width:17px;height:18px;background:#393939;border-radius:4.5px;border:1px solid #262626;box-shadow:inset 0 1px 0 #4c4c4c;"></div>
<div style="left:451px;top:804px;width:17px;height:18px;background:#393939;border-radius:4.5px;border:1px solid #262626;box-shadow:inset 0 1px 0 #4c4c4c;"></div>
<div style="left:386.2px;top:804.5px;width:20.3px;height:17px;background:#2b2b2b;border-radius:4px;"></div>
<div style="left:396.2px;top:805px;width:1px;height:16px;background:#363636;"></div>
<svg style="left:365px;top:804px;" width="18" height="18" viewBox="0 0 18 18"><g transform="translate(0.2,0.5)"><path d="M7.8 5V11.8M7.8 8.4H9.5" stroke="#5a5a5a" stroke-width="1.2" fill="none"/><rect x="2.3" y="4" width="5.2" height="1.9" fill="#f0f0f0"/><rect x="2.3" y="10" width="5.2" height="1.9" fill="#f0f0f0"/><rect x="9.3" y="7.4" width="5.2" height="1.9" fill="#f0f0f0"/><path d="M16.8 13.5V16.8H13.5Z" fill="#5fd1b0"/></g></svg>
<svg style="left:388px;top:809px;" width="7" height="8" viewBox="0 0 7 8"><g transform="translate(0,0.5)"><path d="M0 3.5L3 0.3H6.5V6.7H3Z" fill="#d8c060"/></g></svg>
<svg style="left:398px;top:809px;" width="7" height="8" viewBox="0 0 7 8"><g transform="translate(0.5,0.5)"><path d="M6.5 3.5L3.5 0.3H0V6.7H3.5Z" fill="#c855e8"/></g></svg>
<svg style="left:410px;top:804px;" width="18" height="18" viewBox="0 0 18 18"><g transform="translate(0.4,0.5)"><path d="M6 3H11V4.5H10V8L12.5 10.5V11.5H4.5V10.5L7 8V4.5H6Z" fill="#d2d2d2"/><path d="M8.5 11.5V15.5" stroke="#d2d2d2" stroke-width="1.1"/></g></svg>
<svg style="left:431px;top:805px;" width="16" height="17" viewBox="0 0 16 17"><g transform="translate(0,0.5)"><g fill="#e0e0e0"><circle cx="3" cy="2.5" r="1.15" fill="#a8a8a8"/><circle cx="9.5" cy="3" r="1.15" fill="#a8a8a8"/><circle cx="3" cy="9" r="1.15" fill="#a8a8a8"/><path d="M9.5 5.5L10.5 8.5L13.5 9.5L10.5 10.5L9.5 13.5L8.5 10.5L5.5 9.5L8.5 8.5Z"/></g><path d="M15.5 12.5V15.5H12.5Z" fill="#4fd1a5"/></g></svg>
<svg style="left:450px;top:804px;" width="18" height="18" viewBox="0 0 18 18"><g transform="translate(0.6,0.5)"><path d="M4.5 4.5L12.5 12.5M12.5 4.5L4.5 12.5" stroke="#cacaca" stroke-width="1"/></g></svg>
<div style="left:6px;top:824px;width:468px;height:22px;background:#2a2a2a;"></div>
<div style="left:184px;top:826px;width:96px;height:20px;background:#3e3e3e;border-radius:4px 4px 0 0;"></div>
<span style="left:205.3px;top:829px;line-height:14px;letter-spacing:-0.05px;">Behaviour</span>
<span style="left:302.4px;top:829px;line-height:14px;letter-spacing:0.18px;color:#a0a0a0;">Deformer</span>
<div style="left:376px;top:832px;width:1px;height:11px;background:#a0a0a0;"></div>
<span style="left:404.5px;top:829px;line-height:14px;letter-spacing:0.08px;color:#a0a0a0;">Falloffs</span>
<div style="left:6px;top:846.5px;width:468px;height:200px;background:#363636;"></div>
<div style="left:11px;top:850px;width:458px;height:76px;background:#1c1c1c;"></div>
<svg style="left:11px;top:850px;" width="458" height="76" viewBox="0 0 458 76"><rect x="9" y="0" width="2" height="76" fill="#2f2f2f"/><rect x="19" y="0" width="2" height="76" fill="#2f2f2f"/><rect x="29" y="0" width="2" height="76" fill="#2f2f2f"/><rect x="39" y="0" width="2" height="76" fill="#2f2f2f"/><rect x="49" y="0" width="2" height="76" fill="#2f2f2f"/><rect x="59" y="0" width="2" height="76" fill="#2f2f2f"/><rect x="69" y="0" width="2" height="76" fill="#2f2f2f"/><rect x="79" y="0" width="2" height="76" fill="#2f2f2f"/><rect x="89" y="0" width="2" height="76" fill="#2f2f2f"/><rect x="99" y="0" width="2" height="76" fill="#2f2f2f"/><rect x="109" y="0" width="2" height="76" fill="#2f2f2f"/><rect x="119" y="0" width="2" height="76" fill="#2f2f2f"/><rect x="129" y="0" width="2" height="76" fill="#2f2f2f"/><rect x="139" y="0" width="2" height="76" fill="#2f2f2f"/><rect x="149" y="0" width="2" height="76" fill="#2f2f2f"/><rect x="159" y="0" width="2" height="76" fill="#2f2f2f"/><rect x="169" y="0" width="2" height="76" fill="#2f2f2f"/><rect x="179" y="0" width="2" height="76" fill="#2f2f2f"/><rect x="189" y="0" width="2" height="76" fill="#2f2f2f"/><rect x="199" y="0" width="2" height="76" fill="#2f2f2f"/><rect x="209" y="0" width="2" height="76" fill="#2f2f2f"/><rect x="219" y="0" width="2" height="76" fill="#2f2f2f"/><rect x="229" y="0" width="2" height="76" fill="#2f2f2f"/><rect x="239" y="0" width="2" height="76" fill="#2f2f2f"/><rect x="249" y="0" width="2" height="76" fill="#2f2f2f"/><rect x="259" y="0" width="2" height="76" fill="#2f2f2f"/><rect x="269" y="0" width="2" height="76" fill="#2f2f2f"/><rect x="279" y="0" width="2" height="76" fill="#2f2f2f"/><rect x="289" y="0" width="2" height="76" fill="#2f2f2f"/><rect x="299" y="0" width="2" height="76" fill="#2f2f2f"/><rect x="309" y="0" width="2" height="76" fill="#2f2f2f"/><rect x="319" y="0" width="2" height="76" fill="#2f2f2f"/><rect x="329" y="0" width="2" height="76" fill="#2f2f2f"/><rect x="339" y="0" width="2" height="76" fill="#2f2f2f"/><rect x="349" y="0" width="2" height="76" fill="#2f2f2f"/><rect x="359" y="0" width="2" height="76" fill="#2f2f2f"/><rect x="369" y="0" width="2" height="76" fill="#2f2f2f"/><rect x="379" y="0" width="2" height="76" fill="#2f2f2f"/><rect x="389" y="0" width="2" height="76" fill="#2f2f2f"/><rect x="399" y="0" width="2" height="76" fill="#2f2f2f"/><rect x="409" y="0" width="2" height="76" fill="#2f2f2f"/><rect x="419" y="0" width="2" height="76" fill="#2f2f2f"/><rect x="429" y="0" width="2" height="76" fill="#2f2f2f"/><rect x="439" y="0" width="2" height="76" fill="#2f2f2f"/><rect x="449" y="0" width="2" height="76" fill="#2f2f2f"/><rect x="0" y="0" width="1" height="76" fill="#3a3a3a"/><rect x="0" y="37" width="458" height="2" fill="#3b69bd"/><polyline points="0.0,38.30 2.0,35.76 4.0,33.23 6.0,30.74 7.9,28.30 9.9,25.93 11.9,23.65 13.9,21.46 15.9,19.40 17.9,17.46 19.9,15.67 21.9,14.04 23.8,12.57 25.8,11.28 27.8,10.18 29.8,9.28 31.8,8.57 33.8,8.07 35.8,7.78 37.8,7.70 39.7,7.83 41.7,8.18 43.7,8.73 45.7,9.49 47.7,10.44 49.7,11.59 51.7,12.93 53.6,14.44 55.6,16.11 57.6,17.94 59.6,19.91 61.6,22.01 63.6,24.22 65.6,26.52 67.6,28.91 69.5,31.37 71.5,33.87 73.5,36.40 75.5,38.95 77.5,41.49 79.5,44.01 81.5,46.49 83.5,48.91 85.4,51.26 87.4,53.52 89.4,55.67 91.4,57.71 93.4,59.61 95.4,61.36 97.4,62.95 99.3,64.37 101.3,65.61 103.3,66.67 105.3,67.52 107.3,68.18 109.3,68.62 111.3,68.86 113.3,68.88 115.2,68.70 117.2,68.30 119.2,67.70 121.2,66.89 123.2,65.88 125.2,64.69 127.2,63.31 129.2,61.75 131.1,60.04 133.1,58.17 135.1,56.17 137.1,54.04 139.1,51.81 141.1,49.48 143.1,47.07 145.0,44.60 147.0,42.09 149.0,39.55 151.0,37.01 153.0,34.47 155.0,31.96 157.0,29.49 159.0,27.09 160.9,24.76 162.9,22.52 164.9,20.40 166.9,18.40 168.9,16.53 170.9,14.82 172.9,13.27 174.9,11.89 176.8,10.70 178.8,9.70 180.8,8.89 182.8,8.29 184.8,7.90 186.8,7.71 188.8,7.74 190.7,7.98 192.7,8.43 194.7,9.09 196.7,9.95 198.7,11.00 200.7,12.25 202.7,13.67 204.7,15.27 206.6,17.02 208.6,18.92 210.6,20.96 212.6,23.12 214.6,25.38 216.6,27.73 218.6,30.15 220.6,32.63 222.5,35.15 224.5,37.69 226.5,40.24 228.5,42.77 230.5,45.27 232.5,47.72 234.5,50.11 236.4,52.42 238.4,54.63 240.4,56.72 242.4,58.69 244.4,60.51 246.4,62.19 248.4,63.69 250.4,65.03 252.3,66.17 254.3,67.13 256.3,67.88 258.3,68.43 260.3,68.77 262.3,68.90 264.3,68.82 266.3,68.52 268.2,68.02 270.2,67.31 272.2,66.40 274.2,65.30 276.2,64.01 278.2,62.54 280.2,60.90 282.1,59.11 284.1,57.17 286.1,55.10 288.1,52.92 290.1,50.63 292.1,48.26 294.1,45.82 296.1,43.33 298.0,40.81 300.0,38.26 302.0,35.72 304.0,33.19 306.0,30.70 308.0,28.26 310.0,25.89 312.0,23.61 313.9,21.43 315.9,19.37 317.9,17.43 319.9,15.65 321.9,14.01 323.9,12.55 325.9,11.27 327.8,10.17 329.8,9.26 331.8,8.56 333.8,8.07 335.8,7.78 337.8,7.70 339.8,7.84 341.8,8.19 343.7,8.74 345.7,9.50 347.7,10.46 349.7,11.61 351.7,12.95 353.7,14.46 355.7,16.14 357.7,17.97 359.6,19.94 361.6,22.04 363.6,24.25 365.6,26.56 367.6,28.95 369.6,31.40 371.6,33.91 373.5,36.44 375.5,38.99 377.5,41.53 379.5,44.04 381.5,46.52 383.5,48.95 385.5,51.29 387.5,53.55 389.4,55.70 391.4,57.74 393.4,59.63 395.4,61.38 397.4,62.97 399.4,64.39 401.4,65.63 403.4,66.68 405.3,67.53 407.3,68.18 409.3,68.63 411.3,68.86 413.3,68.88 415.3,68.69 417.3,68.29 419.2,67.69 421.2,66.87 423.2,65.87 425.2,64.67 427.2,63.28 429.2,61.73 431.2,60.01 433.2,58.14 435.1,56.14 437.1,54.01 439.1,51.77 441.1,49.44 443.1,47.03 445.1,44.56 447.1,42.05 449.1,39.51 451.0,36.97 453.0,34.43 455.0,31.92 457.0,29.46" fill="none" stroke="#d6d6d6" stroke-width="1.15"/><rect x="0" y="0" width="1" height="1" fill="#3ce36a"/><rect x="2" y="0" width="1" height="1" fill="#3ce36a"/></svg>
<svg style="left:13px;top:935px;" width="12" height="12" viewBox="0 0 12 12"><g transform="translate(0.5,0.9)"><circle cx="5.5" cy="5.5" r="4.2" fill="none" stroke="#7a7a7a" stroke-width="1.2"/></g></svg>
<span style="left:30px;top:935.1px;line-height:14px;letter-spacing:0.02px;">Strength</span>
<div style="left:177px;top:933px;width:94px;height:16px;background:#2a2a2a;border-radius:3px;"></div>
<span style="left:180.5px;top:935.9px;line-height:12px;font-size:10.5px;color:#707070;">%</span>
<span style="left:194.5px;top:935.1px;line-height:14px;letter-spacing:-0.13px;">100.0</span>
<svg style="left:13px;top:957px;" width="12" height="12" viewBox="0 0 12 12"><g transform="translate(0.5,0.9)"><circle cx="5.5" cy="5.5" r="4.2" fill="none" stroke="#7a7a7a" stroke-width="1.2"/></g></svg>
<span style="left:30px;top:957.1px;line-height:14px;letter-spacing:-0.16px;">Strength Fades to Zero</span>
<div style="left:177px;top:955.4px;width:16px;height:16px;background:#2a2a2a;border-radius:3px;"></div>
<svg style="left:177px;top:955px;" width="16" height="17" viewBox="0 0 16 17"><g transform="translate(0,0.4)"><path d="M2.6 8.6L6 12L13.4 3.6" fill="none" stroke="#2ecc71" stroke-width="2.1"/></g></svg>
<svg style="left:13px;top:979px;" width="12" height="12" viewBox="0 0 12 12"><g transform="translate(0.5,0.9)"><circle cx="5.5" cy="5.5" r="4.2" fill="none" stroke="#7a7a7a" stroke-width="1.2"/></g></svg>
<span style="left:30px;top:979.1px;line-height:14px;letter-spacing:-0.84px;">Type</span>
<div style="left:178px;top:978px;width:192px;height:14px;background:#4a4a4a;border-radius:3px;box-shadow:inset 0 0 0 1px #474747;"></div>
<span style="left:180px;top:979.1px;line-height:14px;letter-spacing:-0.67px;">Sine</span>
<svg style="left:358px;top:983px;" width="8" height="5" viewBox="0 0 8 5"><path d="M0 0L4.0 4.3L8 0" fill="none" stroke="#c4c4c4" stroke-width="1.05"/></svg>
<svg style="left:13px;top:1001px;" width="12" height="12" viewBox="0 0 12 12"><g transform="translate(0.5,0.9)"><circle cx="5.5" cy="5.5" r="4.2" fill="none" stroke="#7a7a7a" stroke-width="1.2"/></g></svg>
<span style="left:30px;top:1001.1px;line-height:14px;letter-spacing:-0.25px;">Wave Style</span>
<div style="left:178px;top:1000px;width:192px;height:14px;background:#4a4a4a;border-radius:3px;box-shadow:inset 0 0 0 1px #474747;"></div>
<span style="left:180px;top:1001.1px;line-height:14px;letter-spacing:-0.03px;">Normal</span>
<svg style="left:358px;top:1005px;" width="8" height="5" viewBox="0 0 8 5"><path d="M0 0L4.0 4.3L8 0" fill="none" stroke="#c4c4c4" stroke-width="1.05"/></svg>
<div style="left:177px;top:1021px;width:17px;height:17px;background:#2b2b2b;border-radius:4.5px;border:1px solid #2f2f2f;box-shadow:inset 0 1px 0 #4a4a4a;"></div>
</div></div>
<div style="left:0px;top:1024px;width:494px;height:7px;background:#1c1c1c;"></div>
<div style="left:488px;top:85px;width:6px;height:939px;background:#121212;"></div>
<div style="left:524px;top:85px;width:6px;height:500px;background:#121212;"></div>
<div style="left:494px;top:85px;width:30px;height:495px;background:#444;"></div>
<svg style="left:502px;top:88px;" width="14" height="4" viewBox="0 0 14 4"><rect x="1.2" y="1.3" width="1.7" height="1.7" fill="#7c7c7c"/><rect x="6.2" y="1.3" width="1.7" height="1.7" fill="#7c7c7c"/><rect x="11.2" y="1.3" width="1.7" height="1.7" fill="#7c7c7c"/></svg>
<div style="left:495px;top:96px;width:28px;height:28px;background:#2a2a2a;border-radius:4px;"></div>
<svg style="left:495px;top:95px;" width="28" height="30" viewBox="0 0 28 30"><path d="M9.5 4.8V20.8L13.3 17.6L15.6 22.6L18.3 21.4L16 16.5L21.3 16.2Z" fill="none" stroke="#2ecc71" stroke-width="1.25" stroke-linejoin="miter"/></svg>
<svg style="left:495px;top:125px;" width="28" height="30" viewBox="0 0 28 30"><defs><linearGradient id="g1" x1="0" y1="0" x2="0" y2="1"><stop offset="0" stop-color="#ffffff"/><stop offset="1" stop-color="#c4c4c4"/></linearGradient></defs><path d="M9.5 5V25L13.5 19.5L23.5 18.5Z" fill="url(#g1)"/></svg>
<svg style="left:495px;top:155px;" width="28" height="30" viewBox="0 0 28 30"><defs><linearGradient id="g2" x1="0" y1="0" x2="0" y2="1"><stop offset="0" stop-color="#ffffff"/><stop offset="1" stop-color="#c4c4c4"/></linearGradient></defs><g transform="translate(6,7.5) rotate(-45)"><path d="M0 0L5.2 9.8L3.4 16H-3.4L-5.2 9.8Z" fill="url(#g2)"/><rect x="-3.5" y="17.3" width="7" height="2.7" fill="#e4e4e4"/><circle cx="0" cy="11.3" r="1.4" fill="#3a3a3a"/><path d="M0 1V10.5" stroke="#444" stroke-width="0.9"/></g></svg>
<svg style="left:495px;top:185px;" width="28" height="30" viewBox="0 0 28 30"><defs><linearGradient id="g3" x1="0" y1="0" x2="0" y2="1"><stop offset="0" stop-color="#ffffff"/><stop offset="1" stop-color="#c4c4c4"/></linearGradient></defs><g transform="translate(21.2,7.7) rotate(45)"><circle cx="0" cy="0" r="2.3" fill="#f6f6f6"/><rect x="-2.3" y="2.9" width="4.6" height="15" fill="url(#g3)"/><path d="M-1.9 19.3H1.9L0 23Z" fill="#dcdcdc"/></g></svg>
<svg style="left:495px;top:215px;" width="28" height="30" viewBox="0 0 28 30"><defs><linearGradient id="g4" x1="0" y1="0" x2="0" y2="1"><stop offset="0" stop-color="#ffffff"/><stop offset="1" stop-color="#c4c4c4"/></linearGradient></defs><rect x="5.9" y="8" width="8.2" height="1" fill="#e8e8e8"/><path d="M3.9 10.2H16.8V19L14.8 20.9H3.9Z" fill="url(#g4)"/><path d="M18.3 13.6L24.1 11.3V19.6L18.3 17.3Z" fill="url(#g4)"/><circle cx="7.1" cy="13" r="1.25" fill="#3a3a3a"/></svg>
<svg style="left:495px;top:245px;" width="28" height="30" viewBox="0 0 28 30"><path d="M6 23L22 7" stroke="#d8d8d8" stroke-width="1"/></svg>
<svg style="left:495px;top:275px;" width="28" height="30" viewBox="0 0 28 30"><defs><linearGradient id="g5" x1="0" y1="0" x2="0" y2="1"><stop offset="0" stop-color="#ffffff"/><stop offset="1" stop-color="#c4c4c4"/></linearGradient></defs><path d="M6.8 7H21.2V10.5H16V23.2H12V10.5H6.8Z" fill="url(#g5)"/></svg>
<svg style="left:495px;top:305px;" width="28" height="30" viewBox="0 0 28 30"><path d="M6 7V19L9 15.5L14 14.5Z" fill="#ececec"/><path d="M10.5 7.5L19 6.5L22 23.5H5.5" fill="none" stroke="#e0e0e0" stroke-width="0.9" stroke-dasharray="5 2"/><rect x="18" y="5.5" width="2" height="2" fill="#fff"/><rect x="21" y="22.5" width="2" height="2" fill="#fff"/><rect x="5" y="22.5" width="2" height="2" fill="#fff"/></svg>
<svg style="left:495px;top:335px;" width="28" height="30" viewBox="0 0 28 30"><defs><linearGradient id="g6" x1="0" y1="0" x2="0" y2="1"><stop offset="0" stop-color="#ffffff"/><stop offset="1" stop-color="#c4c4c4"/></linearGradient></defs><rect x="6.8" y="7.7" width="14.3" height="14.2" fill="url(#g6)"/></svg>
<svg style="left:495px;top:365px;" width="28" height="30" viewBox="0 0 28 30"><defs><linearGradient id="g7" x1="0" y1="0" x2="0" y2="1"><stop offset="0" stop-color="#ffffff"/><stop offset="1" stop-color="#c4c4c4"/></linearGradient></defs><circle cx="14" cy="15" r="8.2" fill="url(#g7)"/></svg>
<svg style="left:495px;top:395px;" width="28" height="30" viewBox="0 0 28 30"><defs><linearGradient id="g8" x1="0" y1="0" x2="0" y2="1"><stop offset="0" stop-color="#ffffff"/><stop offset="1" stop-color="#c4c4c4"/></linearGradient></defs><polygon points="14.00,6.30 22.75,12.66 19.41,22.94 8.59,22.94 5.25,12.66" fill="url(#g8)"/></svg>
<svg style="left:495px;top:425px;" width="28" height="30" viewBox="0 0 28 30"><defs><linearGradient id="g9" x1="0" y1="0" x2="0" y2="1"><stop offset="0" stop-color="#ffffff"/><stop offset="1" stop-color="#c4c4c4"/></linearGradient></defs><polygon points="14.00,5.90 16.35,12.26 23.13,12.53 17.80,16.74 19.64,23.27 14.00,19.50 8.36,23.27 10.20,16.74 4.87,12.53 11.65,12.26" fill="url(#g9)"/></svg>
<svg style="left:495px;top:455px;" width="28" height="30" viewBox="0 0 28 30"><defs><linearGradient id="g10" x1="0" y1="0" x2="0" y2="1"><stop offset="0" stop-color="#ffffff"/><stop offset="1" stop-color="#c4c4c4"/></linearGradient></defs><path d="M13.5 21.5A6.8 6.8 0 1 1 20.8 14" fill="none" stroke="url(#g10)" stroke-width="2.6"/></svg>
<svg style="left:495px;top:485px;" width="28" height="30" viewBox="0 0 28 30"><defs><linearGradient id="g11" x1="0" y1="0" x2="0" y2="1"><stop offset="0" stop-color="#ffffff"/><stop offset="1" stop-color="#c4c4c4"/></linearGradient></defs><path d="M14 6C14.8 11.5 17 14 22.8 15C17 16 14.8 18.5 14 24C13.2 18.5 11 16 5.2 15C11 14 13.2 11.5 14 6Z" fill="url(#g11)"/></svg>
<svg style="left:495px;top:515px;" width="28" height="30" viewBox="0 0 28 30"><defs><linearGradient id="g12" x1="0" y1="0" x2="0" y2="1"><stop offset="0" stop-color="#ffffff"/><stop offset="1" stop-color="#c4c4c4"/></linearGradient></defs><rect x="12.2" y="5.8" width="3.6" height="18.4" rx="0.8" transform="rotate(0 14 15)" fill="url(#g12)"/><rect x="12.2" y="5.8" width="3.6" height="18.4" rx="0.8" transform="rotate(45 14 15)" fill="url(#g12)"/><rect x="12.2" y="5.8" width="3.6" height="18.4" rx="0.8" transform="rotate(90 14 15)" fill="url(#g12)"/><rect x="12.2" y="5.8" width="3.6" height="18.4" rx="0.8" transform="rotate(135 14 15)" fill="url(#g12)"/><circle cx="14" cy="15" r="7" fill="url(#g12)"/><circle cx="14" cy="15" r="3" fill="#444"/></svg>
<svg style="left:503px;top:565px;" width="13" height="11" viewBox="0 0 13 11"><g transform="translate(0,0.5)"><path d="M0.5 0.5L5.5 5.2L0.5 10M6.5 0.5L11.5 5.2L6.5 10" fill="none" stroke="#a0a0a0" stroke-width="1.1"/></g></svg>
<div style="left:530px;top:85px;width:1057px;height:22px;background:#1c1c1c;"></div>
<div style="left:530px;top:85px;width:87px;height:22px;background:#444;border-radius:4px 4px 0 0;"></div>
<span style="left:535.5px;top:90px;line-height:14px;letter-spacing:-0.06px;">Composition 2</span>
<div style="left:530px;top:107px;width:1057px;height:451px;background:#000;"></div>
<svg style="left:693px;top:127px;" width="730" height="410" viewBox="0 0 730 410"><rect x="0.5" y="0" width="729" height="410" fill="#00adff"/><circle cx="426.8" cy="343.7" r="45.5" fill="#3ce38e"/></svg>
<span style="left:569.7px;top:461px;line-height:14px;letter-spacing:-0.4px;color:#efefef;-webkit-text-stroke:0.2px #efefef;">Hold S</span>
<span style="left:605.8px;top:461px;line-height:14px;letter-spacing:-0.1px;color:#484848;">Direct Layer Selection</span>
<span style="left:569.7px;top:475px;line-height:14px;letter-spacing:-0.86px;color:#efefef;-webkit-text-stroke:0.2px #efefef;">Space</span>
<span style="left:603.2px;top:475px;line-height:14px;letter-spacing:-0.19px;color:#484848;">Play/ Stop</span>
<span style="left:569.7px;top:489px;line-height:14px;letter-spacing:-0.39px;color:#efefef;-webkit-text-stroke:0.2px #efefef;">Space + click + drag</span>
<span style="left:674.2px;top:489px;line-height:14px;letter-spacing:-0.78px;color:#484848;">Pan</span>
<span style="left:569.7px;top:503px;line-height:14px;letter-spacing:-0.16px;color:#efefef;-webkit-text-stroke:0.2px #efefef;">Alt + click + drag</span>
<span style="left:659px;top:503px;line-height:14px;letter-spacing:-0.02px;color:#484848;">Move Pivot Point</span>
<span style="left:569.7px;top:517px;line-height:14px;letter-spacing:-0px;color:#efefef;-webkit-text-stroke:0.2px #efefef;">Shift</span>
<span style="left:596.6px;top:517px;line-height:14px;letter-spacing:-0.37px;color:#484848;">Enable Snapping</span>
<div style="left:693.5px;top:127px;width:729px;height:410px;overflow:hidden;">
<span style="left:-87.7px;top:334px;line-height:14px;letter-spacing:-0.1px;color:#5272c8;">Direct Layer Selection</span>
<span style="left:-90.3px;top:348px;line-height:14px;letter-spacing:-0.19px;color:#5272c8;">Play/ Stop</span>
<span style="left:-19.3px;top:362px;line-height:14px;letter-spacing:-0.78px;color:#5272c8;">Pan</span>
<span style="left:-34.5px;top:376px;line-height:14px;letter-spacing:-0.02px;color:#5272c8;">Move Pivot Point</span>
<span style="left:-96.9px;top:390px;line-height:14px;letter-spacing:-0.37px;color:#5272c8;">Enable Snapping</span>
</div>
<span style="left:998.3px;top:537px;line-height:14px;letter-spacing:0.09px;color:#f2f2f2;">Viewport Quality: High</span>
<div style="left:530px;top:558px;width:1057px;height:22px;background:#444;"></div>
<div style="left:535px;top:561px;width:78px;height:16px;background:#2a2a2a;border-radius:3px;"></div>
<span style="left:538.5px;top:562.7px;line-height:14px;letter-spacing:-0.76px;">38%</span>
<svg style="left:600px;top:567px;" width="10" height="5" viewBox="0 0 10 5"><g transform="translate(0.8,0)"><path d="M0 0L4.2 4.6L8.4 0" fill="none" stroke="#c4c4c4" stroke-width="1.05"/></g></svg>
<div style="left:866px;top:560px;width:100px;height:19px;background:#2b2b2b;border-radius:4px;box-shadow:inset 0 0 0 1px #222;"></div>
<div style="left:885.8px;top:560.2px;width:1px;height:18px;background:#3d3d3d;"></div>
<div style="left:905.8px;top:560.2px;width:1px;height:18px;background:#3d3d3d;"></div>
<div style="left:925.8px;top:560.2px;width:1px;height:18px;background:#3d3d3d;"></div>
<div style="left:945.8px;top:560.2px;width:1px;height:18px;background:#3d3d3d;"></div>
<svg style="left:866px;top:559px;" width="21" height="20" viewBox="0 0 21 20"><g transform="translate(0.3,0.7)"><rect x="4" y="5" width="1.8" height="9.5" fill="#cfcfcf"/><path d="M14.5 5V14.5L7 9.75Z" fill="#cfcfcf"/></g></svg>
<svg style="left:886px;top:559px;" width="21" height="20" viewBox="0 0 21 20"><g transform="translate(0.3,0.7)"><path d="M11.5 5V14.5L4 9.75Z" fill="#cfcfcf"/><rect x="13.2" y="5" width="1.8" height="9.5" fill="#cfcfcf"/></g></svg>
<svg style="left:906px;top:559px;" width="21" height="20" viewBox="0 0 21 20"><g transform="translate(0.3,0.7)"><path d="M5 4.8V14.7L13.5 9.75Z" fill="#cfcfcf"/></g></svg>
<svg style="left:926px;top:559px;" width="21" height="20" viewBox="0 0 21 20"><g transform="translate(0.3,0.7)"><rect x="4" y="5" width="1.8" height="9.5" fill="#cfcfcf"/><path d="M7.5 5V14.5L15 9.75Z" fill="#cfcfcf"/></g></svg>
<svg style="left:946px;top:559px;" width="21" height="20" viewBox="0 0 21 20"><g transform="translate(0.3,0.7)"><path d="M4.5 5V14.5L12 9.75Z" fill="#cfcfcf"/><rect x="13.7" y="5" width="1.8" height="9.5" fill="#cfcfcf"/></g></svg>
<div style="left:971px;top:560px;width:20px;height:19px;background:#2b2b2b;border-radius:4px;box-shadow:inset 0 0 0 1px #222;"></div>
<svg style="left:971px;top:559px;" width="20" height="20" viewBox="0 0 20 20"><g transform="translate(0.3,0.7)"><path d="M9 7H4.8A1.5 1.5 0 0 0 3.3 8.5V12A1.5 1.5 0 0 0 4.8 13.5H14.5A1.5 1.5 0 0 0 16 12V8.5" fill="none" stroke="#cfcfcf" stroke-width="1.2"/><path d="M10.5 3.5L15 6.5L10.5 9.5Z" fill="#cfcfcf"/></g></svg>
<div style="left:1232px;top:560px;width:37px;height:19px;background:#2a2a2a;border-radius:3px;"></div>
<svg style="left:1233px;top:564px;" width="15" height="10" viewBox="0 0 15 10"><g transform="translate(0.3,0.7)"><path d="M0 4.5L4 0.3H14V8.7H4Z" fill="#d4d4d4"/><circle cx="5" cy="4.5" r="1.5" fill="#2a2a2a"/></g></svg>
<span style="left:1258px;top:562.7px;line-height:14px;color:#a8a8a8;">0</span>
<div style="left:1272px;top:560px;width:31px;height:19px;background:#2b2b2b;border-radius:4px;box-shadow:inset 0 0 0 1px #2a2a2a;"></div>
<div style="left:1290.5px;top:560.5px;width:1px;height:18px;background:#3a3a3a;"></div>
<svg style="left:1272px;top:560px;" width="19" height="19" viewBox="0 0 19 19"><path d="M3.5 7.5H6L10 4V15L6 11.5H3.5Z" fill="#2ecc71"/><path d="M11.8 6.5A4 4 0 0 1 11.8 12.5M13.8 4.5A7 7 0 0 1 13.8 14.5" fill="none" stroke="#2ecc71" stroke-width="1.2"/></svg>
<svg style="left:1294px;top:566px;" width="7" height="7" viewBox="0 0 7 7"><g transform="translate(0.5,0)"><path d="M0.6 0.7L5.2 3.5L0.6 6.3Z" fill="none" stroke="#9a9a9a" stroke-width="1"/></g></svg>
<div style="left:1307px;top:560px;width:31px;height:19px;background:#2b2b2b;border-radius:4px;box-shadow:inset 0 0 0 1px #2a2a2a;"></div>
<div style="left:1307px;top:560px;width:19px;height:19px;background:#454545;border-radius:4px 0 0 4px;box-shadow:inset 0 0 0 1px #2e2e2e;"></div>
<svg style="left:1307px;top:560px;" width="19" height="19" viewBox="0 0 19 19"><path d="M5.5 10A4.6 4.6 0 0 1 13 5.5L14.5 7.5M9.5 14.5L6 10" fill="none" stroke="#e6e6e6" stroke-width="2.2"/></svg>
<svg style="left:1329px;top:566px;" width="7" height="7" viewBox="0 0 7 7"><g transform="translate(0.5,0)"><path d="M0.6 0.7L5.2 3.5L0.6 6.3Z" fill="none" stroke="#9a9a9a" stroke-width="1"/></g></svg>
<div style="left:1342px;top:560px;width:31px;height:19px;background:#2b2b2b;border-radius:4px;box-shadow:inset 0 0 0 1px #2a2a2a;"></div>
<div style="left:1342px;top:560px;width:19px;height:19px;background:#454545;border-radius:4px 0 0 4px;box-shadow:inset 0 0 0 1px #2e2e2e;"></div>
<svg style="left:1342px;top:560px;" width="19" height="19" viewBox="0 0 19 19"><path d="M6.5 3V16M12 3V16M3 7H15.5M3 12H15.5" stroke="#e0e0e0" stroke-width="1.1"/></svg>
<svg style="left:1364px;top:566px;" width="7" height="7" viewBox="0 0 7 7"><g transform="translate(0.5,0)"><path d="M0.6 0.7L5.2 3.5L0.6 6.3Z" fill="none" stroke="#9a9a9a" stroke-width="1"/></g></svg>
<div style="left:1377px;top:560px;width:20px;height:19px;background:#2b2b2b;border-radius:4px;box-shadow:inset 0 0 0 1px #222;"></div>
<svg style="left:1377px;top:560px;" width="20" height="19" viewBox="0 0 20 19"><g transform="translate(0.2,0.2)"><rect x="2.5" y="4" width="3" height="3.3" fill="#2ecc71"/><rect x="2.5" y="8.3" width="3" height="6.2" fill="#2ecc71"/><rect x="7" y="4.5" width="9.5" height="4.5" fill="none" stroke="#2ecc71" stroke-width="1.2"/><rect x="6.5" y="11" width="10.5" height="3.5" fill="#2ecc71"/></g></svg>
<div style="left:1400px;top:560px;width:20px;height:19px;background:#2b2b2b;border-radius:4px;box-shadow:inset 0 0 0 1px #222;"></div>
<svg style="left:1400px;top:560px;" width="20" height="19" viewBox="0 0 20 19"><g transform="translate(0.3,0.2)"><path d="M3 4.5L7.5 9.25L3 14Z" fill="#cfcfcf"/><path d="M7.5 4.5L12 9.25L7.5 14M11.5 4.5L16 9.25L11.5 14" fill="none" stroke="#cfcfcf" stroke-width="1.5"/></g></svg>
<div style="left:1423px;top:560px;width:31px;height:19px;background:#2b2b2b;border-radius:4px;box-shadow:inset 0 0 0 1px #2a2a2a;"></div>
<div style="left:1423px;top:560px;width:19px;height:19px;background:#454545;border-radius:4px 0 0 4px;box-shadow:inset 0 0 0 1px #2e2e2e;"></div>
<svg style="left:1423px;top:560px;" width="19" height="19" viewBox="0 0 19 19"><rect x="3.2" y="4" width="12.6" height="9" fill="none" stroke="#d8d8d8" stroke-width="1.2"/><rect x="2.6" y="13" width="13.8" height="2" fill="#cfcfcf"/></svg>
<svg style="left:1445px;top:566px;" width="7" height="7" viewBox="0 0 7 7"><g transform="translate(0.5,0)"><path d="M0.6 0.7L5.2 3.5L0.6 6.3Z" fill="none" stroke="#9a9a9a" stroke-width="1"/></g></svg>
<div style="left:1458px;top:560px;width:31px;height:19px;background:#2b2b2b;border-radius:4px;box-shadow:inset 0 0 0 1px #2a2a2a;"></div>
<div style="left:1458px;top:560px;width:19px;height:19px;background:#454545;border-radius:4px 0 0 4px;box-shadow:inset 0 0 0 1px #2e2e2e;"></div>
<svg style="left:1458px;top:560px;" width="19" height="19" viewBox="0 0 19 19"><rect x="3.5" y="4" width="7" height="4.5" fill="none" stroke="#d0d0d0" stroke-width="1.1"/><path d="M12.5 6.5V10.5H5.5M14.5 8.5V12.5H7.5M16.5 10.5V14.5H9.5" fill="none" stroke="#8a8a8a" stroke-width="1"/></svg>
<svg style="left:1480px;top:566px;" width="7" height="7" viewBox="0 0 7 7"><g transform="translate(0.5,0)"><path d="M0.6 0.7L5.2 3.5L0.6 6.3Z" fill="none" stroke="#9a9a9a" stroke-width="1"/></g></svg>
<div style="left:1493px;top:560px;width:31px;height:19px;background:#2b2b2b;border-radius:4px;box-shadow:inset 0 0 0 1px #2a2a2a;"></div>
<div style="left:1493px;top:560px;width:19px;height:19px;background:#454545;border-radius:4px 0 0 4px;box-shadow:inset 0 0 0 1px #2e2e2e;"></div>
<svg style="left:1493px;top:560px;" width="19" height="19" viewBox="0 0 19 19"><rect x="2.5" y="3" width="8.5" height="8.5" fill="#cfcfcf"/><rect x="8" y="8" width="8.5" height="7.5" fill="#454545" stroke="#e0e0e0" stroke-width="1.1"/></svg>
<svg style="left:1515px;top:566px;" width="7" height="7" viewBox="0 0 7 7"><g transform="translate(0.5,0)"><path d="M0.6 0.7L5.2 3.5L0.6 6.3Z" fill="none" stroke="#9a9a9a" stroke-width="1"/></g></svg>
<div style="left:1528px;top:560px;width:31px;height:19px;background:#2b2b2b;border-radius:4px;box-shadow:inset 0 0 0 1px #2a2a2a;"></div>
<div style="left:1546.5px;top:560.5px;width:1px;height:18px;background:#3a3a3a;"></div>
<svg style="left:1528px;top:560px;" width="19" height="19" viewBox="0 0 19 19"><rect x="4" y="3.3" width="3" height="3" fill="#2ecc71"/><rect x="4" y="9.3" width="3" height="3" fill="#2ecc71"/><rect x="7" y="6.3" width="3" height="3" fill="#2ecc71"/><rect x="7" y="12.3" width="3" height="3" fill="#2ecc71"/><rect x="10" y="3.3" width="3" height="3" fill="#2ecc71"/><rect x="10" y="9.3" width="3" height="3" fill="#2ecc71"/><rect x="13" y="6.3" width="3" height="3" fill="#2ecc71"/><rect x="13" y="12.3" width="3" height="3" fill="#2ecc71"/></svg>
<svg style="left:1550px;top:566px;" width="7" height="7" viewBox="0 0 7 7"><g transform="translate(0.5,0)"><path d="M0.6 0.7L5.2 3.5L0.6 6.3Z" fill="none" stroke="#9a9a9a" stroke-width="1"/></g></svg>
<div style="left:1563px;top:560px;width:20px;height:19px;background:#2b2b2b;border-radius:4px;box-shadow:inset 0 0 0 1px #222;"></div>
<svg style="left:1563px;top:560px;" width="20" height="19" viewBox="0 0 20 19"><g transform="translate(0,0.2)"><rect x="8.35" y="2.25" width="2.8" height="14.0" rx="0.6" transform="rotate(0 9.75 9.25)" fill="#d8d8d8"/><rect x="8.35" y="2.25" width="2.8" height="14.0" rx="0.6" transform="rotate(45 9.75 9.25)" fill="#d8d8d8"/><rect x="8.35" y="2.25" width="2.8" height="14.0" rx="0.6" transform="rotate(90 9.75 9.25)" fill="#d8d8d8"/><rect x="8.35" y="2.25" width="2.8" height="14.0" rx="0.6" transform="rotate(135 9.75 9.25)" fill="#d8d8d8"/><circle cx="9.75" cy="9.25" r="5.2" fill="#d8d8d8"/><circle cx="9.75" cy="9.25" r="2.496" fill="#2b2b2b"/></g></svg>
<div style="left:1587px;top:85px;width:6px;height:500px;background:#121212;"></div>
<div style="left:1593px;top:85px;width:321px;height:22px;background:#1c1c1c;"></div>
<div style="left:1593px;top:85px;width:40px;height:22px;background:#464646;border-radius:4px 4px 0 0;"></div>
<div style="left:1634px;top:85px;width:69px;height:22px;background:#222;border-radius:4px 4px 0 0;"></div>
<span style="left:1598.3px;top:90.3px;line-height:14px;letter-spacing:0.08px;">Color</span>
<span style="left:1639.5px;top:90.3px;line-height:14px;letter-spacing:-0.3px;">Add Layers</span>
<div style="left:1593px;top:107px;width:321px;height:377px;background:#464646;"></div>
<div style="left:1900px;top:107px;width:14px;height:377px;background:#424242;"></div>
<div style="left:1902px;top:108px;width:10.3px;height:303px;background:#555;border-radius:5px;"></div>
<div style="left:1646px;top:119.5px;width:200px;height:200px;border-radius:50%;background:conic-gradient(from 90deg,#ff0000,#ff00ff,#0000ff,#00ffff,#00ff00,#ffff00,#ff0000);-webkit-mask:radial-gradient(circle closest-side,transparent 74.5%,#000 75.2%,#000 99.3%,transparent 100%);mask:radial-gradient(circle closest-side,transparent 74.5%,#000 75.2%,#000 99.3%,transparent 100%);"></div>
<div style="left:1702px;top:176px;width:90px;height:90px;background:linear-gradient(to right,#000,rgba(0,0,0,0)),linear-gradient(to bottom,#fff,#00ff7f);"></div>
<svg style="left:1664px;top:169px;" width="14" height="14" viewBox="0 0 14 14"><circle cx="7" cy="6.7" r="5.7" fill="none" stroke="#f0f0f0" stroke-width="1"/></svg>
<svg style="left:1775px;top:235px;" width="14" height="14" viewBox="0 0 14 14"><circle cx="6.8" cy="6.9" r="5.7" fill="none" stroke="#f0f0f0" stroke-width="1"/></svg>
<div style="left:1600px;top:333px;width:22.3px;height:22.2px;background:#3ce38e;border-radius:3px;"></div>
<div style="left:1871.2px;top:333.2px;width:21.8px;height:21.6px;background:#2b2b2b;border-radius:4px;box-shadow:inset 0 0 0 1px #262626;"></div>
<svg style="left:1871px;top:333px;" width="23" height="23" viewBox="0 0 23 23"><g transform="translate(0.2,0.2)"><path d="M5 17L5.5 14.5L11.5 8.5L13.5 10.5L7.5 16.5Z" fill="none" stroke="#cfcfcf" stroke-width="1"/><path d="M11 7.5L14.5 11M12.5 9L15 5.8A1.6 1.6 0 0 1 17.2 8L14 10.5" fill="#e6e6e6" stroke="#e6e6e6" stroke-width="1.3"/></g></svg>
<div style="left:1600.2px;top:360.3px;width:49.4px;height:17.6px;background:#4a4a4a;border-radius:3px;box-shadow:inset 0 0 0 1px #383838;"></div>
<span style="left:1603.3px;top:362.8px;line-height:14px;letter-spacing:-0.17px;">Hex</span>
<svg style="left:1636px;top:366px;" width="10" height="6" viewBox="0 0 10 6"><g transform="translate(0.7,0.8)"><path d="M0 0L4.25 4.4L8.5 0" fill="none" stroke="#c4c4c4" stroke-width="1.05"/></g></svg>
<div style="left:1653.2px;top:358.1px;width:239.8px;height:21.7px;background:#262626;border-radius:3px;"></div>
<span style="left:1658px;top:362.8px;line-height:14px;color:#4a4a4a;">#</span>
<span style="left:1670.4px;top:362.8px;line-height:14px;letter-spacing:-0.15px;">3ce38e</span>
<div style="left:1600px;top:389.8px;width:229px;height:4.4px;background:#e6e6e6;border-radius:2.2px;"></div>
<svg style="left:1828px;top:386px;" width="12" height="12" viewBox="0 0 12 12"><circle cx="5.9" cy="6" r="5.3" fill="#7fd4ba" stroke="#3a3a3a" stroke-width="0.6"/><circle cx="5.9" cy="6" r="2" fill="#5da892"/></svg>
<div style="left:1849.1px;top:384.2px;width:43.9px;height:15.6px;background:#2a2a2a;border-radius:3px;"></div>
<span style="left:1853px;top:386.1px;line-height:14px;color:#555;">A</span>
<span style="left:1866.1px;top:386.1px;line-height:14px;letter-spacing:0.24px;">255</span>
<div style="left:1597.3px;top:406.2px;width:298.7px;height:22px;background:#262626;"></div>
<div style="left:1598.8px;top:408px;width:148.2px;height:20px;background:#464646;border-radius:4px 4px 0 0;"></div>
<span style="left:1648.1px;top:410.7px;line-height:14px;letter-spacing:-0.29px;">Swatches</span>
<span style="left:1793.5px;top:410.7px;line-height:14px;letter-spacing:0.02px;color:#b0b0b0;">Generator</span>
<div style="left:1598.3px;top:431.3px;width:256.7px;height:17.6px;background:#5c5c5c;border-radius:4px;"></div>
<div style="left:1599.3px;top:432px;width:62px;height:16.2px;background:#262626;border-radius:3px;"></div>
<svg style="left:1604px;top:434px;" width="14" height="12" viewBox="0 0 14 12"><g transform="translate(0.5,0.5)"><path d="M1 0.5V10.5M4.5 0.5V10.5" stroke="#2ecc71" stroke-width="1.7"/><path d="M7.5 1L11.5 10.3" stroke="#2ecc71" stroke-width="1.7"/></g></svg>
<span style="left:1621.4px;top:434.2px;line-height:14px;letter-spacing:0.09px;">Library</span>
<svg style="left:1670px;top:434px;" width="13" height="12" viewBox="0 0 13 12"><g transform="translate(0.5,0.5)"><path d="M0.5 0.5H4.5L5.5 2H10.5V3H0.5Z" fill="#cfcfcf"/><rect x="0.5" y="3.5" width="10" height="7" fill="#d8d8d8"/><path d="M2 5.5H3.5M4.5 5.5H9.5M2 7.5H3.5M4.5 7.5H9.5M2 9.3H3.5M4.5 9.3H9.5" stroke="#5c5c5c" stroke-width="0.9"/></g></svg>
<span style="left:1686px;top:434.2px;line-height:14px;letter-spacing:0.11px;">Project</span>
<svg style="left:1737px;top:434px;" width="11" height="12" viewBox="0 0 11 12"><g transform="translate(0.5,0.5)"><path d="M1 0.7H5.8L8.5 3.5V10.3H1Z" fill="none" stroke="#e0e0e0" stroke-width="1.1"/><path d="M5.5 0.7V3.8H8.5" fill="none" stroke="#e0e0e0" stroke-width="0.9"/></g></svg>
<span style="left:1752px;top:434.2px;line-height:14px;letter-spacing:-0.76px;">Scene</span>
<svg style="left:1800px;top:434px;" width="13" height="12" viewBox="0 0 13 12"><g transform="translate(0.5,0.5)"><path d="M3 0.8H8.5A2.5 2.5 0 0 1 11 3.3V6L7 10.2H3A2.5 2.5 0 0 1 0.8 7.7V3.3A2.5 2.5 0 0 1 3 0.8Z" fill="none" stroke="#e0e0e0" stroke-width="1.1"/><path d="M11 6H8.5A1.5 1.5 0 0 0 7 7.5V10.2" fill="none" stroke="#e0e0e0" stroke-width="0.9"/></g></svg>
<span style="left:1816.2px;top:434.2px;line-height:14px;letter-spacing:-0.47px;">Labels</span>
<div style="left:1858.2px;top:431.3px;width:36.6px;height:17.6px;background:#5c5c5c;border-radius:4px;"></div>
<div style="left:1859px;top:432px;width:17.5px;height:16.2px;background:#262626;border-radius:3px;"></div>
<svg style="left:1862px;top:435px;" width="11" height="10" viewBox="0 0 11 10"><g transform="translate(0.5,0)"><rect x="0.5" y="0.6" width="3.6" height="3.6" rx="0.6" fill="#2ecc71"/><rect x="0.5" y="5.7" width="3.6" height="3.6" rx="0.6" fill="#2ecc71"/><rect x="5.6" y="0.6" width="3.6" height="3.6" rx="0.6" fill="#2ecc71"/><rect x="5.6" y="5.7" width="3.6" height="3.6" rx="0.6" fill="#2ecc71"/></g></svg>
<svg style="left:1880px;top:435px;" width="12" height="10" viewBox="0 0 12 10"><path d="M0.5 1.5H11.5M0.5 5.1H11.5M0.5 8.7H11.5" stroke="#e0e0e0" stroke-width="1.1"/></svg>
<div style="left:1598.3px;top:452.8px;width:275px;height:16.5px;background:#4a4a4a;border-radius:3px;box-shadow:inset 0 0 0 1px #5a5a5a;"></div>
<span style="left:1601.5px;top:455.1px;line-height:14px;letter-spacing:-0.1px;">Alice</span>
<svg style="left:1860px;top:459px;" width="10" height="5" viewBox="0 0 10 5"><g transform="translate(0.8,0)"><path d="M0 0L4.2 4.5L8.4 0" fill="none" stroke="#c4c4c4" stroke-width="1.05"/></g></svg>
<div style="left:1880.3px;top:460.3px;width:2.2px;height:2.2px;background:#d8d8d8;border-radius:1px;"></div>
<div style="left:1885.1px;top:460.3px;width:2.2px;height:2.2px;background:#d8d8d8;border-radius:1px;"></div>
<div style="left:1889.9px;top:460.3px;width:2.2px;height:2.2px;background:#d8d8d8;border-radius:1px;"></div>
<div style="left:1598.3px;top:470.6px;width:296.5px;height:13.4px;background:#262626;"></div>
<div style="left:1600.2px;top:472.4px;width:18px;height:11.6px;background:#4a7fa8;border-radius:3px 3px 0 0;"></div>
<div style="left:1622.13px;top:472.4px;width:18px;height:11.6px;background:#d6dcb8;border-radius:3px 3px 0 0;"></div>
<div style="left:1644.06px;top:472.4px;width:18px;height:11.6px;background:#f0bc5e;border-radius:3px 3px 0 0;"></div>
<div style="left:1665.99px;top:472.4px;width:18px;height:11.6px;background:#c4ae9a;border-radius:3px 3px 0 0;"></div>
<div style="left:1687.92px;top:472.4px;width:18px;height:11.6px;background:#dd6b61;border-radius:3px 3px 0 0;"></div>
<div style="left:1593px;top:484px;width:321px;height:6.3px;background:#121212;"></div>
<div style="left:1593px;top:490.3px;width:321px;height:21.7px;background:#1a1a1a;"></div>
<div style="left:1593px;top:490.3px;width:38px;height:21.7px;background:#464646;border-radius:4px 4px 0 0;"></div>
<span style="left:1598.3px;top:495px;line-height:14px;letter-spacing:0.08px;">Align</span>
<div style="left:1593px;top:512px;width:321px;height:68px;background:#464646;"></div>
<span style="left:1601.5px;top:525.1px;line-height:14px;letter-spacing:0.04px;">Alignment</span>
<span style="left:1601.5px;top:553.2px;line-height:14px;letter-spacing:0.29px;">Distribution</span>
<div style="left:1790.3px;top:522.5px;width:53.4px;height:17.5px;background:#2b2b2b;border-radius:4px;box-shadow:inset 0 0 0 1px #222;"></div>
<div style="left:1807.6px;top:523px;width:1px;height:16.5px;background:#3d3d3d;"></div>
<div style="left:1825.4px;top:523px;width:1px;height:16.5px;background:#3d3d3d;"></div>
<svg style="left:1790px;top:522px;" width="19" height="18" viewBox="0 0 19 18"><g transform="translate(0.3,0.5)"><path d="M4 3.5V14.5" stroke="#ececec" stroke-width="1.2"/><path d="M6.5 6.5H11M6.5 11.5H14.5" stroke="#ececec" stroke-width="1.8"/></g></svg>
<svg style="left:1808px;top:522px;" width="18" height="18" viewBox="0 0 18 18"><g transform="translate(0.1,0.5)"><path d="M9 3V15" stroke="#ececec" stroke-width="1.2"/><path d="M5.5 6.5H12.5M3.5 11.5H14.5" stroke="#ececec" stroke-width="1.8"/></g></svg>
<svg style="left:1825px;top:522px;" width="19" height="18" viewBox="0 0 19 18"><g transform="translate(0.9,0.5)"><path d="M14 3.5V14.5" stroke="#ececec" stroke-width="1.2"/><path d="M7 6.5H11.5M3.5 11.5H11.5" stroke="#ececec" stroke-width="1.8"/></g></svg>
<div style="left:1852.4px;top:522.5px;width:53.4px;height:17.5px;background:#2b2b2b;border-radius:4px;box-shadow:inset 0 0 0 1px #222;"></div>
<div style="left:1869.7px;top:523px;width:1px;height:16.5px;background:#3d3d3d;"></div>
<div style="left:1887.5px;top:523px;width:1px;height:16.5px;background:#3d3d3d;"></div>
<svg style="left:1852px;top:522px;" width="19" height="18" viewBox="0 0 19 18"><g transform="translate(0.4,0.5)"><path d="M3.5 4H14.5" stroke="#ececec" stroke-width="1.2"/><path d="M6.5 6V14.5M11.5 6V10" stroke="#ececec" stroke-width="1.8"/></g></svg>
<svg style="left:1870px;top:522px;" width="18" height="18" viewBox="0 0 18 18"><g transform="translate(0.2,0.5)"><path d="M3 9H15" stroke="#ececec" stroke-width="1.2"/><path d="M6.5 3.5V14.5M11.5 5.5V12.5" stroke="#ececec" stroke-width="1.8"/></g></svg>
<svg style="left:1888px;top:522px;" width="18" height="18" viewBox="0 0 18 18"><g transform="translate(0,0.5)"><path d="M3.5 14.5H14.5" stroke="#ececec" stroke-width="1.2"/><path d="M6.5 8.5V12.5M11.5 4V12.5" stroke="#ececec" stroke-width="1.8"/></g></svg>
<div style="left:1790.3px;top:550.3px;width:53.4px;height:17.5px;background:#2b2b2b;border-radius:4px;box-shadow:inset 0 0 0 1px #222;"></div>
<div style="left:1807.6px;top:550.8px;width:1px;height:16.5px;background:#3d3d3d;"></div>
<div style="left:1825.4px;top:550.8px;width:1px;height:16.5px;background:#3d3d3d;"></div>
<svg style="left:1790px;top:550px;" width="19" height="18" viewBox="0 0 19 18"><g transform="translate(0.3,0.3)"><path d="M4 3.5V14.5" stroke="#ececec" stroke-width="1.2"/><path d="M9.5 5V13.5" stroke="#ececec" stroke-width="2"/><path d="M14.5 3.5V14.5" stroke="#ececec" stroke-width="1.2"/></g></svg>
<svg style="left:1808px;top:550px;" width="18" height="18" viewBox="0 0 18 18"><g transform="translate(0.1,0.3)"><path d="M3.5 4H14.5M3.5 14.5H14.5" stroke="#ececec" stroke-width="1.2"/><path d="M5.5 9.2H12.5" stroke="#ececec" stroke-width="2"/></g></svg>
<svg style="left:1825px;top:550px;" width="19" height="18" viewBox="0 0 19 18"><g transform="translate(0.9,0.3)"><rect x="3" y="10.5" width="3" height="3.5" fill="#ececec"/><rect x="7.5" y="7" width="3" height="4" fill="#ececec"/><rect x="12" y="3.5" width="3" height="4" fill="#ececec"/><path d="M3.5 4.5C6 3 8 3 10 4.5M8 14C10.5 15 12.5 14.5 14.5 12.5" fill="none" stroke="#ececec" stroke-width="0.9" stroke-dasharray="1.5 1.5"/></g></svg>
<div style="left:1914px;top:85px;width:6px;height:946px;background:#1e1e1e;"></div>
<div style="left:494px;top:580px;width:1420px;height:6px;background:#121212;"></div>
<div style="left:494px;top:586px;width:1420px;height:22px;background:#1c1c1c;"></div>
<div style="left:494px;top:586px;width:89px;height:22px;background:#404040;border-radius:4px 4px 0 0;"></div>
<div style="left:584.2px;top:586px;width:100px;height:22px;background:#222;border-radius:4px 4px 0 0;"></div>
<div style="left:685.5px;top:586px;width:111.2px;height:22px;background:#222;border-radius:4px 4px 0 0;"></div>
<span style="left:499.7px;top:591px;line-height:14px;letter-spacing:-0.23px;">Scene Window</span>
<span style="left:589.2px;top:591px;line-height:14px;letter-spacing:-0.11px;">JavaScript Editor</span>
<span style="left:690.3px;top:591px;line-height:14px;letter-spacing:-0.18px;">Dependency Graph</span>
<div style="left:494px;top:608px;width:1420px;height:390px;background:#2a2a2a;"></div>
<span style="left:803px;top:613px;line-height:14px;letter-spacing:-0.06px;color:#a0a0a0;">Composition 1</span>
<svg style="left:1187px;top:616px;" width="8" height="8" viewBox="0 0 8 8"><g transform="translate(0.5,0.5)"><path d="M0.5 0.5L6.5 6.5M6.5 0.5L0.5 6.5" stroke="#a8a8a8" stroke-width="1"/></g></svg>
<div style="left:1204.2px;top:610px;width:705px;height:20.3px;background:#444;border-radius:4px 4px 0 0;"></div>
<span style="left:1507.5px;top:613px;line-height:14px;letter-spacing:-0.01px;">Composition 2</span>
<svg style="left:1892px;top:616px;" width="8" height="8" viewBox="0 0 8 8"><g transform="translate(0.5,0.5)"><path d="M0.5 0.5L6.5 6.5M6.5 0.5L0.5 6.5" stroke="#b8b8b8" stroke-width="1"/></g></svg>
<div style="left:494px;top:630.3px;width:490px;height:41.5px;background:#444;"></div>
<div style="left:496.3px;top:632.7px;width:279.3px;height:19px;background:#262626;border-radius:9.5px;"></div>
<svg style="left:499px;top:635px;" width="15" height="15" viewBox="0 0 15 15"><g transform="translate(0.4,0.9)"><circle cx="6" cy="6" r="4.6" fill="none" stroke="#d8d8d8" stroke-width="1.1"/><path d="M9.5 9.5L12 12" stroke="#d8d8d8" stroke-width="1.8"/></g></svg>
<span style="left:520.4px;top:635.9px;line-height:14px;letter-spacing:-0.28px;color:#8a8a8a;">Enter a layer name</span>
<div style="left:778px;top:633px;width:20px;height:19px;background:#2b2b2b;border-radius:4.5px;border:1px solid #2f2f2f;box-shadow:inset 0 1px 0 #4a4a4a;"></div>
<svg style="left:778px;top:632px;" width="20" height="20" viewBox="0 0 20 20"><g transform="translate(0.1,0.7)"><path d="M9.7 4.5V14M5 9.2H14.5" stroke="#f0f0f0" stroke-width="1.5"/><path d="M18.2 14.5V17.5H15.2Z" fill="#4fd1a5"/></g></svg>
<div style="left:822px;top:633px;width:20px;height:19px;background:#2b2b2b;border-radius:4.5px;border:1px solid #2f2f2f;box-shadow:inset 0 1px 0 #4a4a4a;"></div>
<div style="left:844px;top:633px;width:20px;height:19px;background:#2b2b2b;border-radius:4.5px;border:1px solid #2f2f2f;box-shadow:inset 0 1px 0 #4a4a4a;"></div>
<div style="left:866px;top:633px;width:20px;height:19px;background:#2b2b2b;border-radius:4.5px;border:1px solid #2f2f2f;box-shadow:inset 0 1px 0 #4a4a4a;"></div>
<svg style="left:822px;top:632px;" width="20" height="20" viewBox="0 0 20 20"><g transform="translate(0.2,0.7)"><circle cx="8" cy="12" r="3.6" fill="#4a4a4a"/><circle cx="9.8" cy="10" r="3.8" fill="#6c6c6c"/><circle cx="12.2" cy="7.3" r="4" fill="#d8d8d8"/></g></svg>
<svg style="left:846px;top:634px;" width="16" height="16" viewBox="0 0 16 16"><g fill="#e0e0e0"><circle cx="3" cy="2.5" r="1.15" fill="#a8a8a8"/><circle cx="9.5" cy="3" r="1.15" fill="#a8a8a8"/><circle cx="3" cy="9" r="1.15" fill="#a8a8a8"/><path d="M9.5 5.5L10.5 8.5L13.5 9.5L10.5 10.5L9.5 13.5L8.5 10.5L5.5 9.5L8.5 8.5Z"/></g><path d="M15.5 12.5V15.5H12.5Z" fill="#4fd1a5"/></svg>
<svg style="left:866px;top:632px;" width="20" height="20" viewBox="0 0 20 20"><g transform="translate(0.3,0.7)"><path d="M3 5H6M10 5H16.5M3 9.3H10.5M14.5 9.3H16.5M3 13.7H6M10 13.7H16" stroke="#e0e0e0" stroke-width="1.1"/><circle cx="8" cy="5" r="1.5" fill="none" stroke="#e0e0e0" stroke-width="1"/><circle cx="12.5" cy="9.3" r="1.5" fill="none" stroke="#e0e0e0" stroke-width="1"/><circle cx="8" cy="13.7" r="1.5" fill="none" stroke="#e0e0e0" stroke-width="1"/><path d="M18.5 14.5V17.5H15.5Z" fill="#4fd1a5"/></g></svg>
<div style="left:888.1px;top:632.7px;width:94.2px;height:19px;background:#2a2a2a;border-radius:3px;"></div>
<span style="left:892.8px;top:635.9px;line-height:14px;color:#555;">F</span>
<span style="left:905.6px;top:635.9px;line-height:14px;letter-spacing:-0.15px;">39</span>
<svg style="left:500px;top:656px;" width="10" height="13" viewBox="0 0 10 13"><g transform="translate(0.5,0.8)"><path d="M2.3 5.5V3.6A2.2 2.2 0 0 1 6.7 3.6V5.5" fill="none" stroke="#c8c8c8" stroke-width="1.2"/><rect x="0.5" y="5.5" width="8" height="6" rx="0.8" fill="#c8c8c8"/><rect x="3.8" y="7.5" width="1.4" height="2.2" fill="#444"/></g></svg>
<svg style="left:517px;top:658px;" width="15" height="10" viewBox="0 0 15 10"><g transform="translate(0.2,0.8)"><path d="M0.6 4.5C3 0.8 11 0.8 13.4 4.5C11 8.2 3 8.2 0.6 4.5Z" fill="none" stroke="#c8c8c8" stroke-width="1"/><circle cx="7" cy="4.5" r="2.1" fill="#c8c8c8"/></g></svg>
<svg style="left:536px;top:656px;" width="14" height="15" viewBox="0 0 14 15"><g transform="translate(0.5,0.3)"><path d="M6.5 0.8L12.2 3.8V10.2L6.5 13.2L0.8 10.2V3.8Z" fill="none" stroke="#c8c8c8" stroke-width="1"/><path d="M0.8 3.8L6.5 6.8L12.2 3.8M6.5 6.8V13.2" fill="none" stroke="#c8c8c8" stroke-width="1"/></g></svg>
<svg style="left:556px;top:657px;" width="14" height="13" viewBox="0 0 14 13"><g transform="translate(0,0.3)"><path d="M0.5 4H2.8L6.5 0.8V11.2L2.8 8H0.5Z" fill="#c8c8c8"/><path d="M8.3 3A3.8 3.8 0 0 1 8.3 9M10.3 1A6.5 6.5 0 0 1 10.3 11" fill="none" stroke="#c8c8c8" stroke-width="1.1"/></g></svg>
<svg style="left:575px;top:656px;" width="13" height="14" viewBox="0 0 13 14"><g transform="translate(0,0.8)"><path d="M0.8 12L1.3 9.5L6.8 4L8.8 6L3.3 11.5Z" fill="none" stroke="#9a9a9a" stroke-width="1"/><path d="M6.3 3L9.8 6.5M7.8 4.5L10 2A1.4 1.4 0 0 1 12 4L9.5 6" fill="#bdbdbd" stroke="#bdbdbd" stroke-width="1.2"/></g></svg>
<svg style="left:593px;top:658px;" width="15" height="10" viewBox="0 0 15 10"><g transform="translate(0.4,0.8)"><path d="M0 4.5L4 0.3H14V8.7H4Z" fill="#d0d0d0"/><circle cx="5" cy="4.5" r="1.5" fill="#444"/></g></svg>
<span style="left:649.1px;top:656.7px;line-height:14px;letter-spacing:-0.27px;">Name</span>
<div style="left:494px;top:671.8px;width:476.6px;height:66px;background:#363636;"></div>
<div style="left:972.3px;top:671.8px;width:10px;height:290px;background:#4a4a4a;border-radius:5px;"></div>
<div style="left:496.3px;top:674px;width:17.4px;height:17.7px;background:#2a2a2a;border-radius:3px;"></div>
<div style="left:515.3px;top:674px;width:17.7px;height:17.7px;background:#2a2a2a;border-radius:3px;"></div>
<svg style="left:518px;top:677px;" width="13" height="12" viewBox="0 0 13 12"><g transform="translate(0.5,0)"><circle cx="5.8" cy="6.2" r="4.6" fill="none" stroke="#d4d4d4" stroke-width="1.1"/><path d="M3.3 6L5.5 8.3L10.5 2.5" fill="none" stroke="#d4d4d4" stroke-width="1.3"/></g></svg>
<div style="left:573px;top:674.8px;width:16px;height:16.2px;background:#c8ee7e;border-radius:2.5px;"></div>
<svg style="left:593px;top:678px;" width="15" height="10" viewBox="0 0 15 10"><g transform="translate(0.4,0.5)"><path d="M0 4.5L4 0.3H14V8.7H4Z" fill="#d4d4d4"/><circle cx="5" cy="4.5" r="1.5" fill="#363636"/></g></svg>
<svg style="left:646px;top:679px;" width="18" height="10" viewBox="0 0 18 10"><path d="M0.5 6.5C1.5 6.5 2.5 0.8 4 0.8C5.8 0.8 6.5 9.2 8.3 9.2C10 9.2 10.5 0.8 12.3 0.8C14 0.8 14.6 9.2 16 9.2C17 9.2 17.3 6 17.8 4.5" fill="none" stroke="#90dc98" stroke-width="1.2"/></svg>
<span style="left:667.2px;top:677px;line-height:14px;letter-spacing:-0.09px;">Oscillator [Position.X] Cosine</span>
<div style="left:929.9px;top:674.8px;width:21.1px;height:16.2px;background:#2b2b2b;border-radius:3px;"></div>
<div style="left:940px;top:675.3px;width:1px;height:15.2px;background:#363636;"></div>
<svg style="left:932px;top:679px;" width="7" height="8" viewBox="0 0 7 8"><g transform="translate(0,0.5)"><path d="M0 3.5L3 0.3H6.5V6.7H3Z" fill="#d8c060"/></g></svg>
<svg style="left:943px;top:679px;" width="7" height="8" viewBox="0 0 7 8"><g transform="translate(0,0.5)"><path d="M6.5 3.5L3.5 0.3H0V6.7H3.5Z" fill="#c855e8"/></g></svg>
<svg style="left:955px;top:677px;" width="12" height="12" viewBox="0 0 12 12"><g transform="translate(0.5,0.5)"><circle cx="5.4" cy="5.5" r="4.2" fill="none" stroke="#7a7a7a" stroke-width="1.1"/></g></svg>
<div style="left:496.3px;top:696px;width:17.4px;height:17.7px;background:#2a2a2a;border-radius:3px;"></div>
<div style="left:515.3px;top:696px;width:17.7px;height:17.7px;background:#2a2a2a;border-radius:3px;"></div>
<svg style="left:518px;top:699px;" width="13" height="12" viewBox="0 0 13 12"><g transform="translate(0.5,0)"><circle cx="5.8" cy="6.2" r="4.6" fill="none" stroke="#d4d4d4" stroke-width="1.1"/><path d="M3.3 6L5.5 8.3L10.5 2.5" fill="none" stroke="#d4d4d4" stroke-width="1.3"/></g></svg>
<div style="left:573px;top:696.8px;width:16px;height:16.2px;background:#c8ee7e;border-radius:2.5px;"></div>
<svg style="left:593px;top:700px;" width="15" height="10" viewBox="0 0 15 10"><g transform="translate(0.4,0.5)"><path d="M0 4.5L4 0.3H14V8.7H4Z" fill="#d4d4d4"/><circle cx="5" cy="4.5" r="1.5" fill="#363636"/></g></svg>
<svg style="left:646px;top:701px;" width="18" height="10" viewBox="0 0 18 10"><path d="M0.5 6.5C1.5 6.5 2.5 0.8 4 0.8C5.8 0.8 6.5 9.2 8.3 9.2C10 9.2 10.5 0.8 12.3 0.8C14 0.8 14.6 9.2 16 9.2C17 9.2 17.3 6 17.8 4.5" fill="none" stroke="#90dc98" stroke-width="1.2"/></svg>
<span style="left:667.2px;top:699px;line-height:14px;letter-spacing:-0.1px;">Oscillator [Position.X] Sine</span>
<div style="left:929.9px;top:696.8px;width:21.1px;height:16.2px;background:#2b2b2b;border-radius:3px;"></div>
<div style="left:940px;top:697.3px;width:1px;height:15.2px;background:#363636;"></div>
<svg style="left:932px;top:701px;" width="7" height="8" viewBox="0 0 7 8"><g transform="translate(0,0.5)"><path d="M0 3.5L3 0.3H6.5V6.7H3Z" fill="#d8c060"/></g></svg>
<svg style="left:943px;top:701px;" width="7" height="8" viewBox="0 0 7 8"><g transform="translate(0,0.5)"><path d="M6.5 3.5L3.5 0.3H0V6.7H3.5Z" fill="#c855e8"/></g></svg>
<svg style="left:955px;top:699px;" width="12" height="12" viewBox="0 0 12 12"><g transform="translate(0.5,0.5)"><circle cx="5.4" cy="5.5" r="4.2" fill="none" stroke="#7a7a7a" stroke-width="1.1"/></g></svg>
<div style="left:496.3px;top:718px;width:17.4px;height:17.7px;background:#2a2a2a;border-radius:3px;"></div>
<div style="left:515.3px;top:718px;width:17.7px;height:17.7px;background:#2a2a2a;border-radius:3px;"></div>
<svg style="left:517px;top:722px;" width="15" height="10" viewBox="0 0 15 10"><g transform="translate(0.2,0.5)"><path d="M0.6 4.5C3 0.8 11 0.8 13.4 4.5C11 8.2 3 8.2 0.6 4.5Z" fill="none" stroke="#d0d0d0" stroke-width="1"/><circle cx="7" cy="4.5" r="2.1" fill="#d0d0d0"/></g></svg>
<div style="left:534.5px;top:718px;width:17.4px;height:17.7px;background:#2a2a2a;border-radius:3px;"></div>
<div style="left:573px;top:718.8px;width:16px;height:16.2px;background:#ffe680;border-radius:2.5px;"></div>
<svg style="left:593px;top:722px;" width="15" height="10" viewBox="0 0 15 10"><g transform="translate(0.4,0.5)"><path d="M0 4.5L4 0.3H14V8.7H4Z" fill="#d4d4d4"/><circle cx="5" cy="4.5" r="1.5" fill="#363636"/></g></svg>
<svg style="left:649px;top:720px;" width="13" height="14" viewBox="0 0 13 14"><g transform="translate(0,0.8)"><rect x="1" y="1" width="10.4" height="10.4" fill="none" stroke="#e6d060" stroke-width="1" stroke-dasharray="4 2.4" stroke-dashoffset="2"/><rect x="0" y="0" width="1.8" height="1.8" fill="#fff"/><rect x="0" y="10.6" width="1.8" height="1.8" fill="#fff"/><rect x="10.6" y="0" width="1.8" height="1.8" fill="#fff"/><rect x="10.6" y="10.6" width="1.8" height="1.8" fill="#fff"/></g></svg>
<span style="left:667.2px;top:721px;line-height:14px;letter-spacing:-0.45px;">Ellipse Shape</span>
<div style="left:929.9px;top:718.8px;width:21.1px;height:16.2px;background:#2b2b2b;border-radius:3px;"></div>
<div style="left:940px;top:719.3px;width:1px;height:15.2px;background:#363636;"></div>
<svg style="left:932px;top:723px;" width="7" height="8" viewBox="0 0 7 8"><g transform="translate(0,0.5)"><path d="M0 3.5L3 0.3H6.5V6.7H3Z" fill="#d8c060"/></g></svg>
<svg style="left:943px;top:723px;" width="7" height="8" viewBox="0 0 7 8"><g transform="translate(0,0.5)"><path d="M6.5 3.5L3.5 0.3H0V6.7H3.5Z" fill="#7a7a7a"/></g></svg>
<svg style="left:955px;top:721px;" width="12" height="12" viewBox="0 0 12 12"><g transform="translate(0.5,0.5)"><circle cx="5.4" cy="5.5" r="4.2" fill="none" stroke="#7a7a7a" stroke-width="1.1"/></g></svg>
<div style="left:545px;top:669.1px;width:431px;height:28px;border:3px solid #b4e61e;"></div>
<div style="left:495.3px;top:964px;width:473.6px;height:10px;background:#4a4a4a;border-radius:5px;"></div>
<div style="left:494px;top:976px;width:490px;height:22px;background:#444;"></div>
<div style="left:497px;top:978px;width:20px;height:18px;background:#2b2b2b;border-radius:4.5px;border:1px solid #2f2f2f;box-shadow:inset 0 1px 0 #4a4a4a;"></div>
<svg style="left:500px;top:982px;" width="15" height="10" viewBox="0 0 15 10"><g transform="translate(0.5,0.5)"><path d="M0 4.5L4 0.3H14V8.7H4Z" fill="#d8d8d8"/><circle cx="5" cy="4.5" r="1.5" fill="#2b2b2b"/></g></svg>
<div style="left:776px;top:978px;width:19px;height:18px;background:#2b2b2b;border-radius:4.5px;border:1px solid #2f2f2f;box-shadow:inset 0 1px 0 #4a4a4a;"></div>
<svg style="left:775px;top:977px;" width="20" height="20" viewBox="0 0 20 20"><g transform="translate(0.5,0.7)"><rect x="4.5" y="4.3" width="10" height="10" fill="none" stroke="#d0d0d0" stroke-width="1"/><rect x="8" y="7.8" width="3" height="3" fill="#e6e6e6"/></g></svg>
<div style="left:798.1px;top:979px;width:182.7px;height:17px;background:#5c5c5c;border-radius:4px;"></div>
<div style="left:798.6px;top:979.4px;width:86.6px;height:16.2px;background:#262626;border-radius:3px;"></div>
<svg style="left:804px;top:982px;" width="14" height="11" viewBox="0 0 14 11"><g transform="translate(0.5,0.5)"><path d="M0.5 1H11.5M2.5 5H10M0.5 9H11.5" stroke="#2ecc71" stroke-width="1.6"/></g></svg>
<span style="left:821.2px;top:981.3px;line-height:14px;letter-spacing:-0.03px;">Time Editor</span>
<svg style="left:893px;top:981px;" width="13" height="13" viewBox="0 0 13 13"><path d="M2.5 0.5V12M0.5 10H12.5" stroke="#c8c8c8" stroke-width="1"/><path d="M2.5 10L11 3.5" stroke="#c8c8c8" stroke-width="1"/></svg>
<span style="left:910.2px;top:981.3px;line-height:14px;letter-spacing:-0.08px;">Graph Editor</span>
<div style="left:984px;top:630px;width:4px;height:368px;background:#2a2a2a;"></div>
<div style="left:986px;top:807px;width:2px;height:2px;background:#8c8c8c;"></div>
<div style="left:986px;top:810px;width:2px;height:2px;background:#8c8c8c;"></div>
<div style="left:986px;top:813px;width:2px;height:2px;background:#8c8c8c;"></div>
<div style="left:986px;top:816px;width:2px;height:2px;background:#8c8c8c;"></div>
<div style="left:986px;top:819px;width:2px;height:2px;background:#8c8c8c;"></div>
<div style="left:986px;top:822px;width:2px;height:2px;background:#8c8c8c;"></div>
<div style="left:988px;top:630px;width:926px;height:334px;background:#1c1c1c;"></div>
<div style="left:991px;top:631px;width:923px;height:23px;background:#252525;"></div>
<svg style="left:988px;top:630px;" width="926" height="25" viewBox="0 0 926 25"><g transform="translate(0.4,0.3)"><rect x="11.10" y="16" width="1" height="7.8" fill="#a0a0a0"/><rect x="21.96" y="19.8" width="1" height="4" fill="#8a8a8a"/><rect x="32.82" y="19.8" width="1" height="4" fill="#8a8a8a"/><rect x="43.68" y="19.8" width="1" height="4" fill="#8a8a8a"/><rect x="54.54" y="19.8" width="1" height="4" fill="#8a8a8a"/><rect x="65.40" y="16" width="1" height="7.8" fill="#a0a0a0"/><rect x="76.26" y="19.8" width="1" height="4" fill="#8a8a8a"/><rect x="87.12" y="19.8" width="1" height="4" fill="#8a8a8a"/><rect x="97.98" y="19.8" width="1" height="4" fill="#8a8a8a"/><rect x="108.84" y="19.8" width="1" height="4" fill="#8a8a8a"/><rect x="119.70" y="16" width="1" height="7.8" fill="#a0a0a0"/><rect x="130.56" y="19.8" width="1" height="4" fill="#8a8a8a"/><rect x="141.42" y="19.8" width="1" height="4" fill="#8a8a8a"/><rect x="152.28" y="19.8" width="1" height="4" fill="#8a8a8a"/><rect x="163.14" y="19.8" width="1" height="4" fill="#8a8a8a"/><rect x="174.00" y="16" width="1" height="7.8" fill="#a0a0a0"/><rect x="184.86" y="19.8" width="1" height="4" fill="#8a8a8a"/><rect x="195.72" y="19.8" width="1" height="4" fill="#8a8a8a"/><rect x="206.58" y="19.8" width="1" height="4" fill="#8a8a8a"/><rect x="217.44" y="19.8" width="1" height="4" fill="#8a8a8a"/><rect x="228.30" y="16" width="1" height="7.8" fill="#a0a0a0"/><rect x="239.16" y="19.8" width="1" height="4" fill="#8a8a8a"/><rect x="250.02" y="19.8" width="1" height="4" fill="#8a8a8a"/><rect x="260.88" y="19.8" width="1" height="4" fill="#8a8a8a"/><rect x="271.74" y="19.8" width="1" height="4" fill="#8a8a8a"/><rect x="282.60" y="16" width="1" height="7.8" fill="#a0a0a0"/><rect x="293.46" y="19.8" width="1" height="4" fill="#8a8a8a"/><rect x="304.32" y="19.8" width="1" height="4" fill="#8a8a8a"/><rect x="315.18" y="19.8" width="1" height="4" fill="#8a8a8a"/><rect x="326.04" y="19.8" width="1" height="4" fill="#8a8a8a"/><rect x="336.90" y="16" width="1" height="7.8" fill="#a0a0a0"/><rect x="347.76" y="19.8" width="1" height="4" fill="#8a8a8a"/><rect x="358.62" y="19.8" width="1" height="4" fill="#8a8a8a"/><rect x="369.48" y="19.8" width="1" height="4" fill="#8a8a8a"/><rect x="380.34" y="19.8" width="1" height="4" fill="#8a8a8a"/><rect x="391.20" y="16" width="1" height="7.8" fill="#a0a0a0"/><rect x="402.06" y="19.8" width="1" height="4" fill="#8a8a8a"/><rect x="412.92" y="19.8" width="1" height="4" fill="#8a8a8a"/><rect x="423.78" y="19.8" width="1" height="4" fill="#8a8a8a"/><rect x="434.64" y="19.8" width="1" height="4" fill="#8a8a8a"/><rect x="445.50" y="16" width="1" height="7.8" fill="#a0a0a0"/><rect x="456.36" y="19.8" width="1" height="4" fill="#8a8a8a"/><rect x="467.22" y="19.8" width="1" height="4" fill="#8a8a8a"/><rect x="478.08" y="19.8" width="1" height="4" fill="#8a8a8a"/><rect x="488.94" y="19.8" width="1" height="4" fill="#8a8a8a"/><rect x="499.80" y="16" width="1" height="7.8" fill="#a0a0a0"/><rect x="510.66" y="19.8" width="1" height="4" fill="#8a8a8a"/><rect x="521.52" y="19.8" width="1" height="4" fill="#8a8a8a"/><rect x="532.38" y="19.8" width="1" height="4" fill="#8a8a8a"/><rect x="543.24" y="19.8" width="1" height="4" fill="#8a8a8a"/><rect x="554.10" y="16" width="1" height="7.8" fill="#a0a0a0"/><rect x="564.96" y="19.8" width="1" height="4" fill="#8a8a8a"/><rect x="575.82" y="19.8" width="1" height="4" fill="#8a8a8a"/><rect x="586.68" y="19.8" width="1" height="4" fill="#8a8a8a"/><rect x="597.54" y="19.8" width="1" height="4" fill="#8a8a8a"/><rect x="608.40" y="16" width="1" height="7.8" fill="#a0a0a0"/><rect x="619.26" y="19.8" width="1" height="4" fill="#8a8a8a"/><rect x="630.12" y="19.8" width="1" height="4" fill="#8a8a8a"/><rect x="640.98" y="19.8" width="1" height="4" fill="#8a8a8a"/><rect x="651.84" y="19.8" width="1" height="4" fill="#8a8a8a"/><rect x="662.70" y="16" width="1" height="7.8" fill="#a0a0a0"/><rect x="673.56" y="19.8" width="1" height="4" fill="#8a8a8a"/><rect x="684.42" y="19.8" width="1" height="4" fill="#8a8a8a"/><rect x="695.28" y="19.8" width="1" height="4" fill="#8a8a8a"/><rect x="706.14" y="19.8" width="1" height="4" fill="#8a8a8a"/><rect x="717.00" y="16" width="1" height="7.8" fill="#a0a0a0"/><rect x="727.86" y="19.8" width="1" height="4" fill="#8a8a8a"/><rect x="738.72" y="19.8" width="1" height="4" fill="#8a8a8a"/><rect x="749.58" y="19.8" width="1" height="4" fill="#8a8a8a"/><rect x="760.44" y="19.8" width="1" height="4" fill="#8a8a8a"/><rect x="771.30" y="16" width="1" height="7.8" fill="#a0a0a0"/><rect x="782.16" y="19.8" width="1" height="4" fill="#8a8a8a"/><rect x="793.02" y="19.8" width="1" height="4" fill="#8a8a8a"/><rect x="803.88" y="19.8" width="1" height="4" fill="#8a8a8a"/><rect x="814.74" y="19.8" width="1" height="4" fill="#8a8a8a"/><rect x="825.60" y="16" width="1" height="7.8" fill="#a0a0a0"/><rect x="836.46" y="19.8" width="1" height="4" fill="#8a8a8a"/><rect x="847.32" y="19.8" width="1" height="4" fill="#8a8a8a"/><rect x="858.18" y="19.8" width="1" height="4" fill="#8a8a8a"/><rect x="869.04" y="19.8" width="1" height="4" fill="#8a8a8a"/><rect x="879.90" y="16" width="1" height="7.8" fill="#a0a0a0"/><rect x="890.76" y="19.8" width="1" height="4" fill="#8a8a8a"/><rect x="901.62" y="19.8" width="1" height="4" fill="#8a8a8a"/><rect x="912.48" y="19.8" width="1" height="4" fill="#8a8a8a"/><rect x="923.34" y="19.8" width="1" height="4" fill="#8a8a8a"/></g></svg>
<span style="left:994.91px;top:631.9px;line-height:14px;color:#d4d4d4;">0</span>
<span style="left:1046.7px;top:631.9px;line-height:14px;letter-spacing:-0.15px;color:#d4d4d4;">15</span>
<span style="left:1101px;top:631.9px;line-height:14px;letter-spacing:-0.15px;color:#d4d4d4;">30</span>
<span style="left:1155.3px;top:631.9px;line-height:14px;letter-spacing:-0.15px;color:#d4d4d4;">45</span>
<span style="left:1209.6px;top:631.9px;line-height:14px;letter-spacing:-0.15px;color:#d4d4d4;">60</span>
<span style="left:1263.9px;top:631.9px;line-height:14px;letter-spacing:-0.15px;color:#d4d4d4;">75</span>
<span style="left:1318.2px;top:631.9px;line-height:14px;letter-spacing:-0.15px;color:#d4d4d4;">90</span>
<span style="left:1370.3px;top:631.9px;line-height:14px;letter-spacing:-0.01px;color:#d4d4d4;">105</span>
<span style="left:1424.6px;top:631.9px;line-height:14px;letter-spacing:-0.01px;color:#d4d4d4;">120</span>
<span style="left:1478.9px;top:631.9px;line-height:14px;letter-spacing:-0.01px;color:#d4d4d4;">135</span>
<span style="left:1533.2px;top:631.9px;line-height:14px;letter-spacing:-0.01px;color:#d4d4d4;">150</span>
<span style="left:1587.5px;top:631.9px;line-height:14px;letter-spacing:-0.01px;color:#d4d4d4;">165</span>
<span style="left:1641.8px;top:631.9px;line-height:14px;letter-spacing:-0.01px;color:#d4d4d4;">180</span>
<span style="left:1696.1px;top:631.9px;line-height:14px;letter-spacing:-0.01px;color:#d4d4d4;">195</span>
<span style="left:1750.4px;top:631.9px;line-height:14px;letter-spacing:-0.01px;color:#d4d4d4;">210</span>
<span style="left:1804.7px;top:631.9px;line-height:14px;letter-spacing:-0.01px;color:#d4d4d4;">225</span>
<span style="left:1859px;top:631.9px;line-height:14px;letter-spacing:-0.01px;color:#d4d4d4;">240</span>
<div style="left:1000px;top:654px;width:905.2px;height:16.5px;background:#444;"></div>
<div style="left:995px;top:653px;width:5px;height:18px;background:#76cbb5;border-radius:0.5px;"></div>
<div style="left:1905px;top:653px;width:5px;height:18px;background:#76cbb5;border-radius:0.5px;"></div>
<div style="left:1000px;top:670.5px;width:905.2px;height:293.5px;background:#2a2a2a;"></div>
<div style="left:1905.2px;top:670.9px;width:8.8px;height:293px;background:#262626;"></div>
<div style="left:1000px;top:674px;width:905.2px;height:18px;background:repeating-linear-gradient(135deg,#e8ff9c 0,#e6ff9a 1.2px,#cdf285 2.2px,#cbf083 11.8px,#defc92 12.4px,#defc92 13px,#c2e57b 14px,#b2d56a 24.6px,#c4e880 25.17px);background-position:0 0;"></div>
<span style="left:1008.2px;top:676px;line-height:14px;letter-spacing:-0.07px;color:#1c1c1c;">Oscillator [Position.X] Cosine</span>
<div style="left:1000px;top:696px;width:905.2px;height:18px;background:repeating-linear-gradient(135deg,#e8ff9c 0,#e6ff9a 1.2px,#cdf285 2.2px,#cbf083 11.8px,#defc92 12.4px,#defc92 13px,#c2e57b 14px,#b2d56a 24.6px,#c4e880 25.17px);background-position:0 0;"></div>
<span style="left:1008.2px;top:698px;line-height:14px;letter-spacing:-0.09px;color:#1c1c1c;">Oscillator [Position.X] Sine</span>
<div style="left:1000px;top:718px;width:905.2px;height:18px;background:#ffe87c;border-radius:2.5px;"></div>
<span style="left:1008.2px;top:720px;line-height:14px;letter-spacing:-0.41px;color:#1c1c1c;">Ellipse Shape</span>
<div style="left:1140.7px;top:652px;width:1px;height:312px;background:#76cbb5;"></div>
<svg style="left:1133px;top:643px;" width="16" height="11" viewBox="0 0 16 11"><g transform="translate(0.7,0.3)"><path d="M0.3 0.3H14.7L7.5 9.6Z" fill="#76cbb5"/></g></svg>
<div style="left:992.2px;top:964px;width:920.5px;height:10px;background:#4a4a4a;border-radius:5px;"></div>
<div style="left:991px;top:976px;width:923px;height:22px;background:#444;"></div>
<div style="left:994px;top:978px;width:17px;height:18px;background:#2b2b2b;border-radius:4.5px;border:1px solid #2f2f2f;box-shadow:inset 0 1px 0 #4a4a4a;"></div>
<svg style="left:994px;top:978px;" width="18" height="18" viewBox="0 0 18 18"><g transform="translate(0.2,0.4)"><path d="M2.5 4H14.5M2.5 8H14.5" stroke="#e0e0e0" stroke-width="1.3"/><path d="M2.5 12H5M7 12H9.5" stroke="#e0e0e0" stroke-width="1.6"/><path d="M16.5 13.5V16.5H13.5Z" fill="#4fd1a5"/></g></svg>
<div style="left:1015px;top:979.2px;width:149.8px;height:15.8px;background:#2a2a2a;border-radius:3px;"></div>
<span style="left:1017.2px;top:981.1px;line-height:14px;letter-spacing:-0.11px;">Default Keyframe Layer</span>
<div style="left:1171px;top:979.2px;width:69.7px;height:15.8px;background:#2a2a2a;border-radius:3px;"></div>
<span style="left:1176px;top:981.1px;line-height:14px;color:#555;">F</span>
<span style="left:1188.5px;top:981.1px;line-height:14px;color:#d0d0d0;">-</span>
<span style="left:1247.3px;top:981.1px;line-height:14px;letter-spacing:-0.06px;">Align:</span>
<div style="left:1283.5px;top:978.4px;width:52.7px;height:17.2px;background:#2b2b2b;border-radius:4px;box-shadow:inset 0 0 0 1px #222;"></div>
<div style="left:1300.6px;top:978.9px;width:1px;height:16.2px;background:#3d3d3d;"></div>
<div style="left:1318.3px;top:978.9px;width:1px;height:16.2px;background:#3d3d3d;"></div>
<svg style="left:1283px;top:978px;" width="19" height="18" viewBox="0 0 19 18"><g transform="translate(0.5,0.4)"><path d="M3.5 3V14.2" stroke="#e6e6e6" stroke-width="1"/><path d="M8 6H13.5M8 11.2H13.5" stroke="#e6e6e6" stroke-width="1.5"/><rect x="5" y="5.2" width="1.6" height="1.6" fill="#76cbb5"/><rect x="5" y="10.4" width="1.6" height="1.6" fill="#76cbb5"/></g></svg>
<svg style="left:1301px;top:978px;" width="18" height="18" viewBox="0 0 18 18"><g transform="translate(0.1,0.4)"><path d="M8.8 3V14.2" stroke="#e6e6e6" stroke-width="1"/><path d="M3.5 6H7M10.6 6H14M3.5 11.2H7M10.6 11.2H14" stroke="#e6e6e6" stroke-width="1.5"/><rect x="8" y="5.2" width="1.6" height="1.6" fill="#76cbb5"/><rect x="8" y="10.4" width="1.6" height="1.6" fill="#76cbb5"/></g></svg>
<svg style="left:1318px;top:978px;" width="19" height="18" viewBox="0 0 19 18"><g transform="translate(0.6,0.4)"><path d="M14 3V14.2" stroke="#e6e6e6" stroke-width="1"/><path d="M4 6H9.5M4 11.2H9.5" stroke="#e6e6e6" stroke-width="1.5"/><rect x="11" y="5.2" width="1.6" height="1.6" fill="#76cbb5"/><rect x="11" y="10.4" width="1.6" height="1.6" fill="#76cbb5"/></g></svg>
<div style="left:1340px;top:978px;width:18px;height:18px;background:#2b2b2b;border-radius:4.5px;border:1px solid #2f2f2f;box-shadow:inset 0 1px 0 #4a4a4a;"></div>
<svg style="left:1340px;top:978px;" width="18" height="18" viewBox="0 0 18 18"><g transform="translate(0.3,0.4)"><rect x="3.5" y="3.5" width="10.4" height="10.2" fill="none" stroke="#c8c8c8" stroke-width="1" stroke-dasharray="3.4 3.5" stroke-dashoffset="1.7"/><rect x="7.7" y="7.6" width="2" height="2" fill="#d8d8d8"/><rect x="2.5" y="2.5" width="2" height="2" fill="#d8d8d8"/><rect x="2.5" y="12.7" width="2" height="2" fill="#d8d8d8"/><rect x="12.9" y="2.5" width="2" height="2" fill="#d8d8d8"/><rect x="12.9" y="12.7" width="2" height="2" fill="#d8d8d8"/></g></svg>
<div style="left:1361.4px;top:978.4px;width:31.1px;height:17.2px;background:#2b2b2b;border-radius:4px;box-shadow:inset 0 0 0 1px #2a2a2a;"></div>
<div style="left:1379.3px;top:978.9px;width:1px;height:16.2px;background:#3a3a3a;"></div>
<svg style="left:1361px;top:978px;" width="19" height="18" viewBox="0 0 19 18"><g transform="translate(0.4,0.4)"><path d="M5.5 10A4.6 4.6 0 0 1 13 5.5L14.5 7.5M9.5 14.5L6 10" fill="none" stroke="#e6e6e6" stroke-width="2.2" transform="translate(0,-0.8)"/></g></svg>
<svg style="left:1383px;top:983px;" width="7" height="8" viewBox="0 0 7 8"><g transform="translate(0.3,0.5)"><path d="M0.6 0.7L5.2 3.5L0.6 6.3Z" fill="none" stroke="#9a9a9a" stroke-width="1"/></g></svg>
<div style="left:1396.2px;top:978.4px;width:31.3px;height:17.2px;background:#2b2b2b;border-radius:4px;box-shadow:inset 0 0 0 1px #2a2a2a;"></div>
<div style="left:1414.1px;top:978.9px;width:1px;height:16.2px;background:#3a3a3a;"></div>
<svg style="left:1396px;top:978px;" width="19" height="18" viewBox="0 0 19 18"><g transform="translate(0.2,0.4)"><path d="M2.5 8.6H5M13 8.6H16" stroke="#d0d0d0" stroke-width="1"/><path d="M6.5 5.5V11.7M9.2 3V14.2M11.8 6V11.2" stroke="#d0d0d0" stroke-width="1"/></g></svg>
<svg style="left:1418px;top:983px;" width="7" height="8" viewBox="0 0 7 8"><g transform="translate(0.1,0.5)"><path d="M0.6 0.7L5.2 3.5L0.6 6.3Z" fill="none" stroke="#9a9a9a" stroke-width="1"/></g></svg>
<svg style="left:1743px;top:980px;" width="15" height="15" viewBox="0 0 15 15"><g transform="translate(0.5,0.5)"><circle cx="6" cy="6" r="5" fill="none" stroke="#d8d8d8" stroke-width="1.1"/><path d="M3.5 6H8.5" stroke="#d8d8d8" stroke-width="1.1"/><path d="M9.8 9.8L12 12" stroke="#d8d8d8" stroke-width="1.8"/></g></svg>
<div style="left:1767px;top:985.3px;width:115px;height:3px;background:#5a5a5a;border-radius:1.5px;"></div>
<svg style="left:1761px;top:981px;" width="12" height="12" viewBox="0 0 12 12"><circle cx="6" cy="6" r="5.3" fill="#7fd4ba" stroke="#3a3a3a" stroke-width="0.6"/><circle cx="6" cy="6" r="2" fill="#5da892"/></svg>
<svg style="left:1887px;top:980px;" width="15" height="15" viewBox="0 0 15 15"><g transform="translate(0.5,0.5)"><circle cx="6" cy="6" r="5" fill="none" stroke="#d8d8d8" stroke-width="1.1"/><path d="M3.5 6H8.5M6 3.5V8.5" stroke="#d8d8d8" stroke-width="1.1"/><path d="M9.8 9.8L12 12" stroke="#d8d8d8" stroke-width="1.8"/></g></svg>
<div style="left:494px;top:998px;width:1420px;height:5.7px;background:#121212;"></div>
<div style="left:494px;top:1004px;width:1420px;height:22px;background:#3a3a3a;"></div>
<div style="left:498px;top:1009.5px;width:1.6px;height:1.6px;background:#8c8c8c;"></div>
<div style="left:498px;top:1014px;width:1.6px;height:1.6px;background:#8c8c8c;"></div>
<div style="left:498px;top:1018.5px;width:1.6px;height:1.6px;background:#8c8c8c;"></div>
<div style="left:507px;top:1006px;width:17px;height:17px;background:#2b2b2b;border-radius:4.5px;border:1px solid #2f2f2f;box-shadow:inset 0 1px 0 #4a4a4a;"></div>
<svg style="left:507px;top:1006px;" width="17" height="18" viewBox="0 0 17 18"><g transform="translate(0.3,0)"><path d="M2.5 3H13.5V11.5H10.5L12.5 14.5L7.5 11.5H2.5Z" fill="#ececec"/><path d="M4 5.3H12M4 7.3H12M4 9.3H12" stroke="#2b2b2b" stroke-width="0.9"/><path d="M16.2 14V17H13.2Z" fill="#4fd1a5"/></g></svg>
<div style="left:528px;top:1008.3px;width:17.8px;height:13.3px;background:#d8c162;border-radius:2px;"></div>
<span style="left:533.3px;top:1008.5px;line-height:14px;color:#3a3210;">0</span>
<div style="left:554.3px;top:1012.3px;width:5.4px;height:5.4px;background:#d8c162;border-radius:50%;"></div>
<span style="left:565.2px;top:1008.7px;line-height:14px;letter-spacing:-0.3px;">You are working in an unsaved scene.</span>
<div style="left:1610.3px;top:1006.1px;width:79.6px;height:17.9px;background:#d4bb69;border-radius:2px;"></div>
<span style="left:1616px;top:1008.7px;line-height:14px;letter-spacing:-0.47px;color:#2a2410;">Feedback</span>
<svg style="left:1671px;top:1008px;" width="13" height="14" viewBox="0 0 13 14"><g transform="translate(0,0.5)"><path d="M1.5 0.5H8L11 3.5V12.5H1.5Z" fill="#f4f4f4" stroke="#c8c8c8" stroke-width="0.6"/><path d="M3 4.5H8M3 6.5H8M3 8.5H6" stroke="#b0c8b0" stroke-width="0.8"/><path d="M5 11L6 8L11 3L13 5L8 10Z" fill="#f08a3c"/><path d="M11 3L13 5" stroke="#e04848" stroke-width="1.6"/></g></svg>
<div style="left:1693.1px;top:1006.1px;width:108.9px;height:17.9px;background:#2ecc71;border-radius:2px;"></div>
<span style="left:1698.5px;top:1008.7px;line-height:14px;letter-spacing:-0.18px;color:#0c2a16;">Upgrade to Pro</span>
<svg style="left:1781px;top:1009px;" width="14" height="13" viewBox="0 0 14 13"><g transform="translate(0,0.5)"><path d="M1 7C1 4 2.5 2.5 4 2.5C5.5 2.5 6.3 4 6.3 6V10.5H2.5C1.5 10.5 1 9 1 7Z" fill="#f2c230"/><path d="M13 7C13 4 11.5 2.5 10 2.5C8.5 2.5 7.7 4 7.7 6V10.5H11.5C12.5 10.5 13 9 13 7Z" fill="#f2c230"/><path d="M3 1L3.5 0M7 1V0M11 1L10.5 0" stroke="#58b0f0" stroke-width="0.8"/></g></svg>
<div style="left:1805px;top:1006.1px;width:106px;height:17.9px;background:#3aa8f2;border-radius:2px;"></div>
<span style="left:1810.3px;top:1008.7px;line-height:14px;letter-spacing:-0.29px;color:#08263e;">Tips and Tricks</span>
<svg style="left:1891px;top:1008px;" width="14" height="14" viewBox="0 0 14 14"><g transform="translate(0,0.5)"><path d="M12.5 0.5C9 0.5 6 2.5 4 6.5L7 9.5C11 7.5 13 4.5 12.5 0.5Z" fill="#e8e8f0"/><path d="M4 6.5L1.5 6.5L3.5 4ZM7 9.5V12L9.5 10Z" fill="#e04848"/><circle cx="9.3" cy="3.8" r="1.2" fill="#58a0e0"/><path d="M3.5 9.5L1 12.2" stroke="#f0a030" stroke-width="1.5"/></g></svg>
<div style="left:494px;top:1026px;width:1426px;height:5px;background:#1c1c1c;"></div>
</body></html>
